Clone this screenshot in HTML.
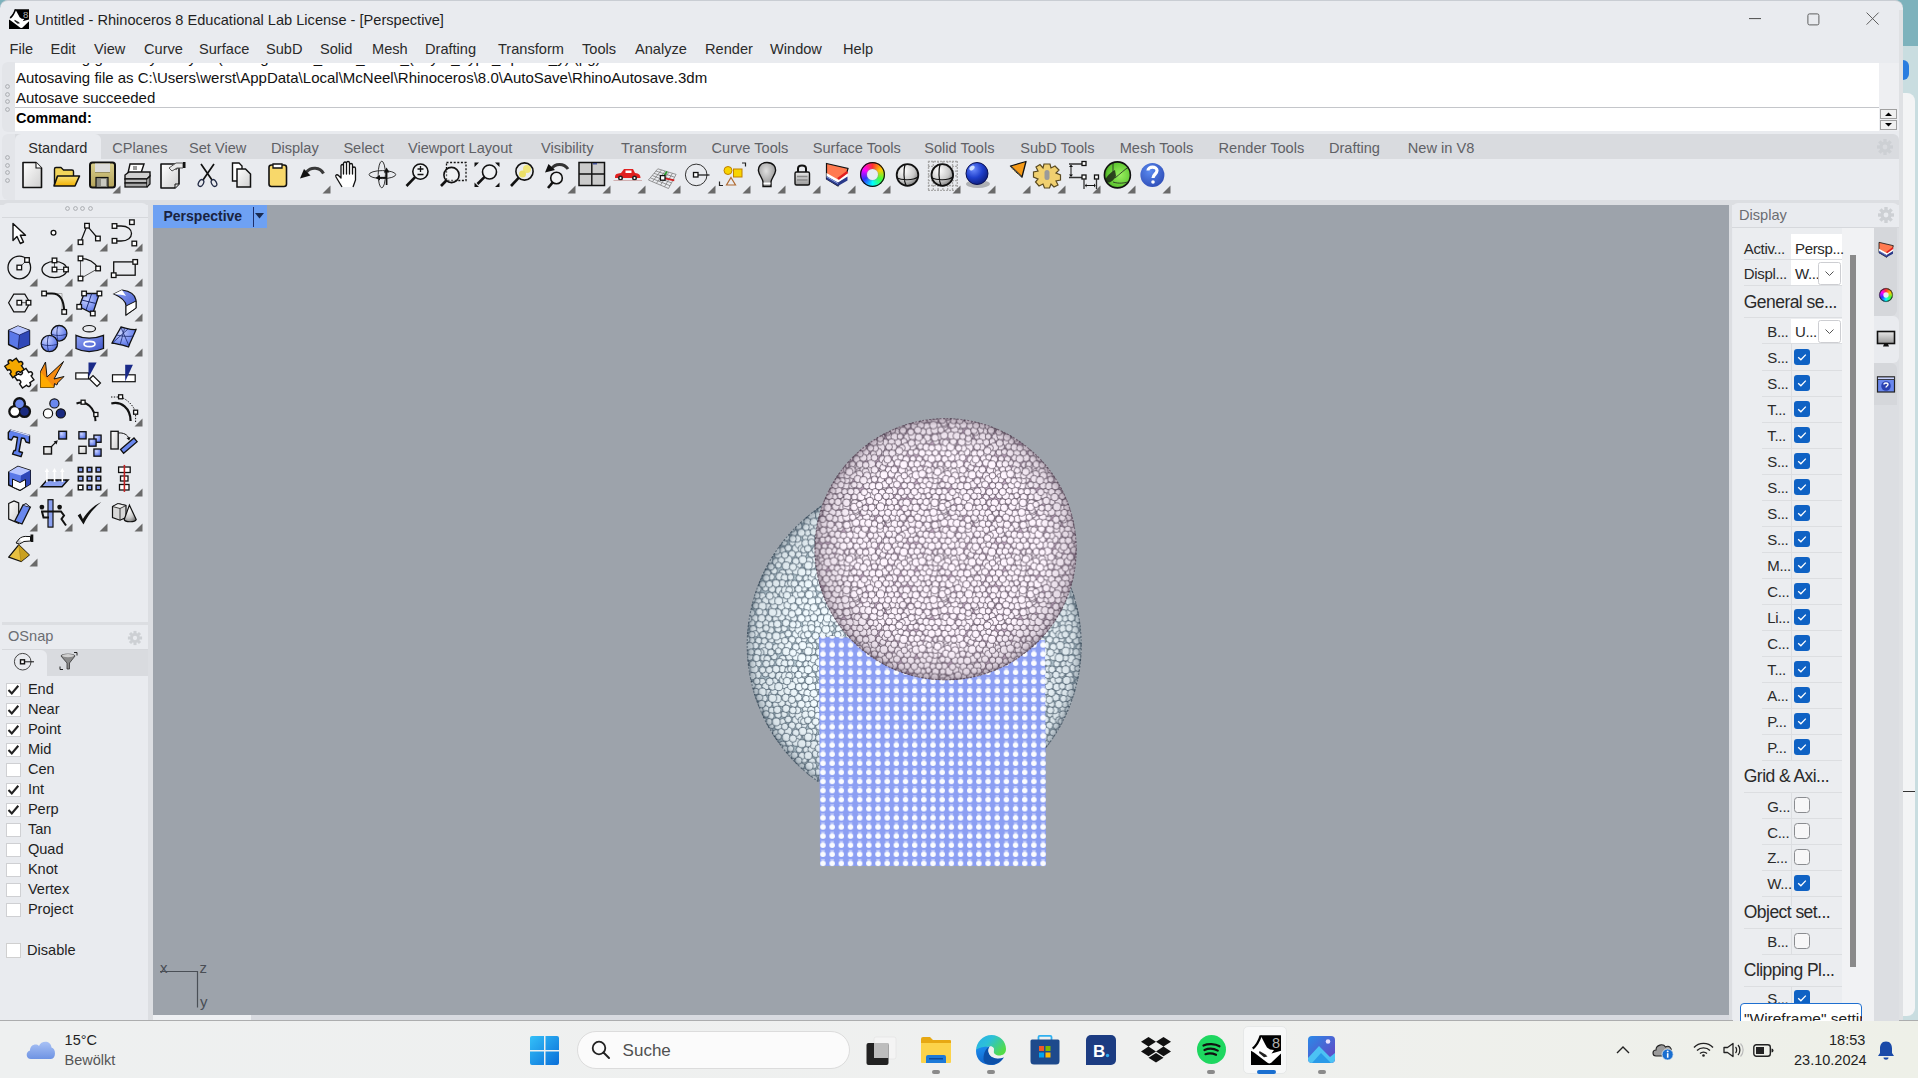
<!DOCTYPE html><html><head><meta charset="utf-8"><style>
*{margin:0;padding:0;box-sizing:border-box}
html,body{width:1918px;height:1078px;overflow:hidden;background:#7eb0bb;font-family:"Liberation Sans", sans-serif}
.t{position:absolute;white-space:nowrap;line-height:1;}
svg{position:absolute;overflow:visible}
</style></head><body><div style="position:absolute;left:0px;top:0px;width:1918px;height:1078px;background:#c9dde0"></div>
<div style="position:absolute;left:0px;top:0px;width:1918px;height:46px;background:#7db2bc"></div>
<div style="position:absolute;left:1903px;top:93px;width:12px;height:923px;background:#f3f4f5;border-radius:0 8px 8px 0"></div>
<div style="position:absolute;left:1903px;top:791px;width:12px;height:1px;background:#333"></div>
<div style="position:absolute;left:1903px;top:60px;width:6px;height:20px;background:#2a7de0;border-radius:0 6px 6px 0"></div>
<div style="position:absolute;left:0px;top:0px;width:1903px;height:1021px;background:#e9ebef;border-radius:8px 8px 0 0;border-top:1px solid #c9cdd3"></div>
<div class="t" style="left:35px;top:12.6px;font-size:14.6px;color:#1f1f1f;font-weight:normal;">Untitled - Rhinoceros 8 Educational Lab License - [Perspective]</div>
<svg style="left:9px;top:9px" width="20" height="20" viewBox="0 0 30 30"><path d="M9.5 0.3 H30 V30 H0 V15.5 C3 13 6 9 9.5 0.3Z" fill="#000"/><path d="M9.5 0.5 C11.5 4 14 9 16 12.5 L19 14.5 L23 15 L20.5 18.5 L30 15.8 V18.5 L21.5 26.5 C19.5 29 17.5 29 15.5 27 L3 17.5 L0 15.8 V15 C4 12.5 7 7 9.5 0.5Z" fill="#fff"/><path d="M9.8 0.5 C8 6 5 11 1.8 13.5" fill="none" stroke="#000" stroke-width="2.4"/><path d="M8.5 16 L14.5 19.5 L16.5 21.5 L13 22.2 L8 18Z" fill="#222"/><text x="21" y="13" font-family="Liberation Sans" font-size="14.5" fill="#b0b0b0">8</text></svg>
<svg style="left:1749px;top:17.5px" width="13" height="2"><rect width="12" height="1.1" fill="#5a5a5a"/></svg>
<svg style="left:1806.5px;top:12.8px" width="14" height="14"><rect x="0.9" y="0.9" width="11" height="11" rx="1.6" fill="none" stroke="#5e5e5e" stroke-width="1"/></svg>
<svg style="left:1865.5px;top:12.3px" width="14" height="14"><path d="M0.6 0.6 L12.6 12.6 M12.6 0.6 L0.6 12.6" stroke="#5e5e5e" stroke-width="1"/></svg>
<div class="t" style="left:9.5px;top:41.6px;font-size:14.6px;color:#2a2a2a;font-weight:normal;">File</div>
<div class="t" style="left:50.5px;top:41.6px;font-size:14.6px;color:#2a2a2a;font-weight:normal;">Edit</div>
<div class="t" style="left:94px;top:41.6px;font-size:14.6px;color:#2a2a2a;font-weight:normal;">View</div>
<div class="t" style="left:144px;top:41.6px;font-size:14.6px;color:#2a2a2a;font-weight:normal;">Curve</div>
<div class="t" style="left:199px;top:41.6px;font-size:14.6px;color:#2a2a2a;font-weight:normal;">Surface</div>
<div class="t" style="left:266px;top:41.6px;font-size:14.6px;color:#2a2a2a;font-weight:normal;">SubD</div>
<div class="t" style="left:320px;top:41.6px;font-size:14.6px;color:#2a2a2a;font-weight:normal;">Solid</div>
<div class="t" style="left:372px;top:41.6px;font-size:14.6px;color:#2a2a2a;font-weight:normal;">Mesh</div>
<div class="t" style="left:425px;top:41.6px;font-size:14.6px;color:#2a2a2a;font-weight:normal;">Drafting</div>
<div class="t" style="left:498px;top:41.6px;font-size:14.6px;color:#2a2a2a;font-weight:normal;">Transform</div>
<div class="t" style="left:582px;top:41.6px;font-size:14.6px;color:#2a2a2a;font-weight:normal;">Tools</div>
<div class="t" style="left:635px;top:41.6px;font-size:14.6px;color:#2a2a2a;font-weight:normal;">Analyze</div>
<div class="t" style="left:705px;top:41.6px;font-size:14.6px;color:#2a2a2a;font-weight:normal;">Render</div>
<div class="t" style="left:770px;top:41.6px;font-size:14.6px;color:#2a2a2a;font-weight:normal;">Window</div>
<div class="t" style="left:843px;top:41.6px;font-size:14.6px;color:#2a2a2a;font-weight:normal;">Help</div>
<div style="position:absolute;left:2px;top:62px;width:13px;height:70px;background:#e3e5e9;border-radius:6px 0 0 6px"></div>
<svg style="left:5px;top:84.0px" width="5" height="5"><circle cx="2.5" cy="2.5" r="1.9" fill="none" stroke="#a4a6aa" stroke-width="0.9"/></svg>
<svg style="left:5px;top:91.5px" width="5" height="5"><circle cx="2.5" cy="2.5" r="1.9" fill="none" stroke="#a4a6aa" stroke-width="0.9"/></svg>
<svg style="left:5px;top:99.0px" width="5" height="5"><circle cx="2.5" cy="2.5" r="1.9" fill="none" stroke="#a4a6aa" stroke-width="0.9"/></svg>
<svg style="left:5px;top:106.5px" width="5" height="5"><circle cx="2.5" cy="2.5" r="1.9" fill="none" stroke="#a4a6aa" stroke-width="0.9"/></svg>
<div style="position:absolute;left:15px;top:63px;width:1864px;height:68px;background:#fff"></div>
<div style="position:absolute;left:1879px;top:63px;width:20px;height:68px;background:#eeeff2"></div>
<div style="position:absolute;left:15px;top:107px;width:1864px;height:1px;background:#c4c6ca"></div>
<div style="position:absolute;left:15px;top:63px;width:1864px;height:10px;overflow:hidden"><div class="t" style="left:1px;top:-13.4px;font-size:15px;color:#111">Autosaving geometry in layer: (Saving: Mesh_Point_cloud_(Layer_Type_Sphere_y) (pg)</div></div>
<div class="t" style="left:16px;top:69.8px;font-size:15px;color:#111;font-weight:normal;">Autosaving file as C:\Users\werst\AppData\Local\McNeel\Rhinoceros\8.0\AutoSave\RhinoAutosave.3dm</div>
<div class="t" style="left:16px;top:89.8px;font-size:15px;color:#111;font-weight:normal;">Autosave succeeded</div>
<div class="t" style="left:16px;top:110.9px;font-size:14.5px;color:#000;font-weight:bold;">Command:</div>
<svg style="left:1880px;top:109px" width="18" height="21"><rect x="0.5" y="0.5" width="16" height="9" fill="#f0f0f0" stroke="#a0a0a0"/><rect x="0.5" y="11.5" width="16" height="9" fill="#f0f0f0" stroke="#a0a0a0"/><path d="M5 7 L8.5 3.5 L12 7Z" fill="#000"/><path d="M5 14 L8.5 17.5 L12 14Z" fill="#000"/></svg>
<div style="position:absolute;left:2px;top:134px;width:1897px;height:66px;background:#e9ebef;border-radius:6px"></div>
<div style="position:absolute;left:2px;top:134px;width:13px;height:66px;background:#e3e5e9;border-radius:6px 0 0 6px"></div>
<svg style="left:5px;top:155.0px" width="5" height="5"><circle cx="2.5" cy="2.5" r="1.9" fill="none" stroke="#a4a6aa" stroke-width="0.9"/></svg>
<svg style="left:5px;top:162.5px" width="5" height="5"><circle cx="2.5" cy="2.5" r="1.9" fill="none" stroke="#a4a6aa" stroke-width="0.9"/></svg>
<svg style="left:5px;top:170.0px" width="5" height="5"><circle cx="2.5" cy="2.5" r="1.9" fill="none" stroke="#a4a6aa" stroke-width="0.9"/></svg>
<svg style="left:5px;top:177.5px" width="5" height="5"><circle cx="2.5" cy="2.5" r="1.9" fill="none" stroke="#a4a6aa" stroke-width="0.9"/></svg>
<div style="position:absolute;left:15px;top:134px;width:1884px;height:25px;background:#d9dbdf;border-radius:0 6px 0 0"></div>
<div style="position:absolute;left:15px;top:134px;width:86px;height:26px;background:#e9ebef;border-radius:6px 6px 0 0"></div>
<div class="t" style="left:28.2px;top:140.6px;font-size:14.6px;color:#2a2a2a;font-weight:normal;">Standard</div>
<div class="t" style="left:112.3px;top:140.6px;font-size:14.6px;color:#5f6166;font-weight:normal;">CPlanes</div>
<div class="t" style="left:189px;top:140.6px;font-size:14.6px;color:#5f6166;font-weight:normal;">Set View</div>
<div class="t" style="left:270.9px;top:140.6px;font-size:14.6px;color:#5f6166;font-weight:normal;">Display</div>
<div class="t" style="left:343.4px;top:140.6px;font-size:14.6px;color:#5f6166;font-weight:normal;">Select</div>
<div class="t" style="left:408px;top:140.6px;font-size:14.6px;color:#5f6166;font-weight:normal;">Viewport Layout</div>
<div class="t" style="left:541px;top:140.6px;font-size:14.6px;color:#5f6166;font-weight:normal;">Visibility</div>
<div class="t" style="left:621px;top:140.6px;font-size:14.6px;color:#5f6166;font-weight:normal;">Transform</div>
<div class="t" style="left:711.5px;top:140.6px;font-size:14.6px;color:#5f6166;font-weight:normal;">Curve Tools</div>
<div class="t" style="left:812.7px;top:140.6px;font-size:14.6px;color:#5f6166;font-weight:normal;">Surface Tools</div>
<div class="t" style="left:924.2px;top:140.6px;font-size:14.6px;color:#5f6166;font-weight:normal;">Solid Tools</div>
<div class="t" style="left:1020.2px;top:140.6px;font-size:14.6px;color:#5f6166;font-weight:normal;">SubD Tools</div>
<div class="t" style="left:1119.7px;top:140.6px;font-size:14.6px;color:#5f6166;font-weight:normal;">Mesh Tools</div>
<div class="t" style="left:1218.5px;top:140.6px;font-size:14.6px;color:#5f6166;font-weight:normal;">Render Tools</div>
<div class="t" style="left:1328.9px;top:140.6px;font-size:14.6px;color:#5f6166;font-weight:normal;">Drafting</div>
<div class="t" style="left:1407.8px;top:140.6px;font-size:14.6px;color:#5f6166;font-weight:normal;">New in V8</div>
<div style="position:absolute;left:0px;top:200px;width:1903px;height:5px;background:#dcdee2"></div>
<div style="position:absolute;left:2px;top:203px;width:146px;height:419px;background:#e9ebef;border-radius:6px 6px 0 0"></div>
<div style="position:absolute;left:2px;top:217px;width:146px;height:1px;background:#d6d8dc"></div>
<svg style="left:65.0px;top:206px" width="5" height="5"><circle cx="2.5" cy="2.5" r="1.9" fill="none" stroke="#a4a6aa" stroke-width="0.9"/></svg>
<svg style="left:72.5px;top:206px" width="5" height="5"><circle cx="2.5" cy="2.5" r="1.9" fill="none" stroke="#a4a6aa" stroke-width="0.9"/></svg>
<svg style="left:80.0px;top:206px" width="5" height="5"><circle cx="2.5" cy="2.5" r="1.9" fill="none" stroke="#a4a6aa" stroke-width="0.9"/></svg>
<svg style="left:87.5px;top:206px" width="5" height="5"><circle cx="2.5" cy="2.5" r="1.9" fill="none" stroke="#a4a6aa" stroke-width="0.9"/></svg>
<div style="position:absolute;left:148px;top:200px;width:5px;height:821px;background:#dcdee2"></div>
<div style="position:absolute;left:2px;top:622px;width:146px;height:3px;background:#dcdee2"></div>
<div style="position:absolute;left:2px;top:625px;width:146px;height:393px;background:#e9ebef;border-radius:6px 6px 0 0"></div>
<div class="t" style="left:8px;top:629.3px;font-size:14.6px;color:#6b6d72;font-weight:normal;">OSnap</div>
<div style="position:absolute;left:2px;top:649px;width:146px;height:27px;background:#d9dbdf"></div>
<div style="position:absolute;left:2px;top:649px;width:146px;height:1px;background:#d6d8dc"></div>
<div style="position:absolute;left:2px;top:650px;width:45px;height:26px;background:#e9ebef;border-radius:0 6px 0 0"></div>
<svg style="left:12px;top:651px" width="24" height="22"><circle cx="10.7" cy="10.7" r="8.3" fill="none" stroke="#444" stroke-width="1"/><rect x="8.5" y="8.8" width="4" height="4" fill="#fff" stroke="#111" stroke-width="1.4"/><path d="M12.5 10.8 H22" stroke="#111" stroke-width="1"/></svg>
<svg style="left:59px;top:652px" width="20" height="20"><path d="M2 4 C2 1.5 16 1.5 16 4 L10.5 11 V17 H8 V11Z" fill="#8a8a8a" stroke="#333" stroke-width="0.8"/><ellipse cx="9" cy="3.6" rx="6" ry="1.6" fill="#d0d0d0"/><path d="M15 0.5 H18 V3.5 M1 14.5 V17.5 H4" fill="none" stroke="#222" stroke-width="1"/></svg>
<svg style="left:127px;top:630px" width="16" height="16" viewBox="0 0 18 18"><g fill="#cdd0d4"><circle cx="9" cy="9" r="5.5"/><rect x="7.3" y="1" width="3.4" height="4" transform="rotate(0 9 9)"/><rect x="7.3" y="1" width="3.4" height="4" transform="rotate(45 9 9)"/><rect x="7.3" y="1" width="3.4" height="4" transform="rotate(90 9 9)"/><rect x="7.3" y="1" width="3.4" height="4" transform="rotate(135 9 9)"/><rect x="7.3" y="1" width="3.4" height="4" transform="rotate(180 9 9)"/><rect x="7.3" y="1" width="3.4" height="4" transform="rotate(225 9 9)"/><rect x="7.3" y="1" width="3.4" height="4" transform="rotate(270 9 9)"/><rect x="7.3" y="1" width="3.4" height="4" transform="rotate(315 9 9)"/></g><circle cx="9" cy="9" r="2.4" fill="#e9ebef"/></svg>
<svg style="left:5.5px;top:682.5px" width="15" height="14"><rect x="0.5" y="0.5" width="14" height="13" fill="#fff" stroke="#cfd0d3"/><path d="M2.5 7 L5.8 10.5 L12.3 2.8" stroke="#222" stroke-width="2.1" fill="none"/></svg>
<div class="t" style="left:27.9px;top:681.8px;font-size:14.6px;color:#1f1f1f;font-weight:normal;">End</div>
<svg style="left:5.5px;top:702.5px" width="15" height="14"><rect x="0.5" y="0.5" width="14" height="13" fill="#fff" stroke="#cfd0d3"/><path d="M2.5 7 L5.8 10.5 L12.3 2.8" stroke="#222" stroke-width="2.1" fill="none"/></svg>
<div class="t" style="left:27.9px;top:701.8px;font-size:14.6px;color:#1f1f1f;font-weight:normal;">Near</div>
<svg style="left:5.5px;top:722.5px" width="15" height="14"><rect x="0.5" y="0.5" width="14" height="13" fill="#fff" stroke="#cfd0d3"/><path d="M2.5 7 L5.8 10.5 L12.3 2.8" stroke="#222" stroke-width="2.1" fill="none"/></svg>
<div class="t" style="left:27.9px;top:721.8px;font-size:14.6px;color:#1f1f1f;font-weight:normal;">Point</div>
<svg style="left:5.5px;top:742.5px" width="15" height="14"><rect x="0.5" y="0.5" width="14" height="13" fill="#fff" stroke="#cfd0d3"/><path d="M2.5 7 L5.8 10.5 L12.3 2.8" stroke="#222" stroke-width="2.1" fill="none"/></svg>
<div class="t" style="left:27.9px;top:741.8px;font-size:14.6px;color:#1f1f1f;font-weight:normal;">Mid</div>
<svg style="left:5.5px;top:762.5px" width="15" height="14"><rect x="0.5" y="0.5" width="14" height="13" fill="#fff" stroke="#cfd0d3"/></svg>
<div class="t" style="left:27.9px;top:761.8px;font-size:14.6px;color:#1f1f1f;font-weight:normal;">Cen</div>
<svg style="left:5.5px;top:782.5px" width="15" height="14"><rect x="0.5" y="0.5" width="14" height="13" fill="#fff" stroke="#cfd0d3"/><path d="M2.5 7 L5.8 10.5 L12.3 2.8" stroke="#222" stroke-width="2.1" fill="none"/></svg>
<div class="t" style="left:27.9px;top:781.8px;font-size:14.6px;color:#1f1f1f;font-weight:normal;">Int</div>
<svg style="left:5.5px;top:802.5px" width="15" height="14"><rect x="0.5" y="0.5" width="14" height="13" fill="#fff" stroke="#cfd0d3"/><path d="M2.5 7 L5.8 10.5 L12.3 2.8" stroke="#222" stroke-width="2.1" fill="none"/></svg>
<div class="t" style="left:27.9px;top:801.8px;font-size:14.6px;color:#1f1f1f;font-weight:normal;">Perp</div>
<svg style="left:5.5px;top:822.5px" width="15" height="14"><rect x="0.5" y="0.5" width="14" height="13" fill="#fff" stroke="#cfd0d3"/></svg>
<div class="t" style="left:27.9px;top:821.8px;font-size:14.6px;color:#1f1f1f;font-weight:normal;">Tan</div>
<svg style="left:5.5px;top:842.5px" width="15" height="14"><rect x="0.5" y="0.5" width="14" height="13" fill="#fff" stroke="#cfd0d3"/></svg>
<div class="t" style="left:27.9px;top:841.8px;font-size:14.6px;color:#1f1f1f;font-weight:normal;">Quad</div>
<svg style="left:5.5px;top:862.5px" width="15" height="14"><rect x="0.5" y="0.5" width="14" height="13" fill="#fff" stroke="#cfd0d3"/></svg>
<div class="t" style="left:27.9px;top:861.8px;font-size:14.6px;color:#1f1f1f;font-weight:normal;">Knot</div>
<svg style="left:5.5px;top:882.5px" width="15" height="14"><rect x="0.5" y="0.5" width="14" height="13" fill="#fff" stroke="#cfd0d3"/></svg>
<div class="t" style="left:27.9px;top:881.8px;font-size:14.6px;color:#1f1f1f;font-weight:normal;">Vertex</div>
<svg style="left:5.5px;top:902.5px" width="15" height="14"><rect x="0.5" y="0.5" width="14" height="13" fill="#fff" stroke="#cfd0d3"/></svg>
<div class="t" style="left:27.9px;top:901.8px;font-size:14.6px;color:#1f1f1f;font-weight:normal;">Project</div>
<svg style="left:6px;top:943px" width="15" height="15"><rect x="0.5" y="0.5" width="14" height="14" fill="#fff" stroke="#d0d0d0"/></svg>
<div class="t" style="left:27px;top:943.1px;font-size:14.6px;color:#1f1f1f;font-weight:normal;">Disable</div>
<div style="position:absolute;left:153px;top:205px;width:1576px;height:810px;background:#9da3ab"></div>
<div style="position:absolute;left:153px;top:205px;width:114px;height:23px;background:#6ea1f3"></div>
<div class="t" style="left:163.5px;top:208.9px;font-size:14px;color:#1a2340;font-weight:bold;">Perspective</div>
<div style="position:absolute;left:253px;top:207px;width:1.2px;height:20px;background:#1f2f6a"></div>
<svg style="left:255px;top:213px" width="10" height="6"><path d="M0 0 L9 0 L4.5 5.5Z" fill="#1a2a50"/></svg>
<div style="position:absolute;left:153px;top:1015px;width:1576px;height:5px;background:#d8dae0"></div>
<div style="position:absolute;left:153px;top:1015px;width:98px;height:5px;background:#eef0f3"></div>
<div style="position:absolute;left:1729px;top:200px;width:3px;height:821px;background:#dcdee2"></div>
<div style="position:absolute;left:1732px;top:203px;width:167px;height:818px;background:#e9ebef;border-radius:6px 6px 0 0"></div>
<div class="t" style="left:1739px;top:208.1px;font-size:14.6px;color:#6b6d72;font-weight:normal;">Display</div>
<div style="position:absolute;left:1732px;top:227px;width:167px;height:1px;background:#d6d8dc"></div>
<div style="position:absolute;left:1874px;top:228px;width:25px;height:793px;background:#dcdee2"></div>
<div style="position:absolute;left:1899px;top:10px;width:4px;height:1011px;background:#dfe1e4"></div>
<div style="position:absolute;left:0px;top:1020px;width:1918px;height:58px;background:linear-gradient(90deg,#eef0f0 0%,#eff0ef 60%,#eef0e8 100%);border-top:1px solid #acadae"></div>
<svg width="0" height="0" style="position:absolute"><defs><linearGradient id="gW" x1="0" y1="0" x2="1" y2="1"><stop offset="0" stop-color="#ffffff"/><stop offset="1" stop-color="#cfcfcf"/></linearGradient><linearGradient id="gY" x1="0" y1="0" x2="0" y2="1"><stop offset="0" stop-color="#f8e27a"/><stop offset="1" stop-color="#f2b000"/></linearGradient><linearGradient id="gK" x1="0" y1="0" x2="0" y2="1"><stop offset="0" stop-color="#d9cf8e"/><stop offset="1" stop-color="#b4a35a"/></linearGradient><linearGradient id="gGr" x1="0" y1="0" x2="0" y2="1"><stop offset="0" stop-color="#e8e8e8"/><stop offset="1" stop-color="#9a9a9a"/></linearGradient><linearGradient id="gB" x1="0" y1="0" x2="0" y2="1"><stop offset="0" stop-color="#a9b8ff"/><stop offset="1" stop-color="#4058d8"/></linearGradient><linearGradient id="gBl" x1="0" y1="0" x2="1" y2="1"><stop offset="0" stop-color="#8fa3f5"/><stop offset="1" stop-color="#3d54c9"/></linearGradient><radialGradient id="rS" cx="0.35" cy="0.3" r="0.8"><stop offset="0" stop-color="#ffffff"/><stop offset="0.6" stop-color="#c8c8c8"/><stop offset="1" stop-color="#6f6f6f"/></radialGradient><radialGradient id="rBS" cx="0.35" cy="0.3" r="0.8"><stop offset="0" stop-color="#6d8dff"/><stop offset="0.5" stop-color="#1f3fcc"/><stop offset="1" stop-color="#0a1870"/></radialGradient><radialGradient id="rG" cx="0.6" cy="0.5" r="0.7"><stop offset="0" stop-color="#9af060"/><stop offset="0.7" stop-color="#5dc530"/><stop offset="1" stop-color="#2a6a10"/></radialGradient><radialGradient id="rH" cx="0.4" cy="0.35" r="0.8"><stop offset="0" stop-color="#5a8af0"/><stop offset="1" stop-color="#2a46b0"/></radialGradient><radialGradient id="rBlu" cx="0.35" cy="0.3" r="0.9"><stop offset="0" stop-color="#c8d2ff"/><stop offset="0.6" stop-color="#7088ee"/><stop offset="1" stop-color="#3a50b8"/></radialGradient><radialGradient id="rBulb" cx="0.45" cy="0.35" r="0.7"><stop offset="0" stop-color="#e0e0e0"/><stop offset="1" stop-color="#8a8a8a"/></radialGradient><conicGradient id="cw"/></defs></svg>
<svg style="left:16.5px;top:160px" width="30" height="30" viewBox="0 0 30 30"><path d="M6 2.5 H19 L24.5 8 V27.5 H6 Z" fill="url(#gW)" stroke="#111" stroke-width="1.6" stroke-linejoin="round"/><path d="M19 2.5 V8 H24.5" fill="#fff" stroke="#111" stroke-width="1.1"/></svg>
<svg style="left:51.5px;top:160px" width="30" height="30" viewBox="0 0 30 30"><path d="M2.5 25 V9 Q2.5 7.5 4 7.5 H9 L11.5 10 H20 Q21.5 10 21.5 11.5 V17 Z" fill="#f2d55a" stroke="#111" stroke-width="1.4" stroke-linejoin="round"/><path d="M5.5 16 H27.5 L23 26 H2 Z" fill="url(#gY)" stroke="#111" stroke-width="1.6" stroke-linejoin="round"/></svg>
<svg style="left:86.5px;top:160px" width="30" height="30" viewBox="0 0 30 30"><rect x="3" y="2.5" width="25" height="25" rx="2.5" fill="url(#gK)" stroke="#111" stroke-width="2"/><rect x="8" y="3.5" width="15" height="9" fill="#dcdcdc"/><path d="M8 12.5 H23" stroke="#9a9060" stroke-width="1"/><rect x="9" y="17.5" width="12" height="10" fill="#8d8d84" stroke="#111" stroke-width="1.2"/><rect x="14" y="19" width="5" height="7" fill="#c9c9c0"/></svg>
<svg style="left:111.5px;top:184.5px" width="9" height="9"><path d="M8.5 0.5 V8.5 H0.5Z" fill="#6a6a6a"/></svg>
<svg style="left:121.5px;top:160px" width="30" height="30" viewBox="0 0 30 30"><path d="M8 4 H22 L19 13 H6 Z" fill="#fff" stroke="#111" stroke-width="1.4"/><rect x="11" y="6" width="4" height="4" fill="#9a9a9a"/><path d="M3 15 L7 12 H28 V16 L25 19 H3 Z" fill="#cfcfcf" stroke="#111" stroke-width="1.4"/><rect x="3" y="19" width="22" height="4" fill="#bdbdbd" stroke="#111" stroke-width="1.3"/><rect x="3" y="23" width="22" height="4" fill="#a5a5a5" stroke="#111" stroke-width="1.3"/><path d="M25 19 L28 16 V24 L25 27" fill="#9a9a9a" stroke="#111" stroke-width="1.2"/></svg>
<svg style="left:156.5px;top:160px" width="30" height="30" viewBox="0 0 30 30"><path d="M4 4 H19 V9 L22 6 V24 L18 28 H4 Z" fill="url(#gW)" stroke="#111" stroke-width="1.6" stroke-linejoin="round"/><path d="M22 24 H18 V28" fill="#ddd" stroke="#111" stroke-width="1"/><path d="M12 8 L19 3 H26 V8 H20 L15 11Z" fill="#e8e8e8" stroke="#555" stroke-width="1"/><rect x="26" y="2" width="2.5" height="6" fill="#111"/></svg>
<svg style="left:191.5px;top:160px" width="30" height="30" viewBox="0 0 30 30"><path d="M9 4 L20 20 M22 4 L11 20" stroke="#111" stroke-width="1.7" fill="none"/><ellipse cx="9" cy="23" rx="2.4" ry="3.6" transform="rotate(30 9 23)" fill="none" stroke="#222a44" stroke-width="1.3"/><ellipse cx="22" cy="23" rx="2.4" ry="3.6" transform="rotate(-30 22 23)" fill="none" stroke="#222a44" stroke-width="1.3"/></svg>
<svg style="left:226.5px;top:160px" width="30" height="30" viewBox="0 0 30 30"><path d="M5.5 3 H12 L15 6 V21 H5.5 Z" fill="#fff" stroke="#111" stroke-width="1.4"/><path d="M10 9 H18.5 L23.5 14 V27 H10 Z" fill="url(#gW)" stroke="#111" stroke-width="1.5"/></svg>
<svg style="left:261.5px;top:160px" width="30" height="30" viewBox="0 0 30 30"><rect x="7" y="5" width="17.5" height="21.5" rx="2.5" fill="#f8d86a" stroke="#111" stroke-width="1.6"/><path d="M11 4 H20 V8 H11 Z" fill="#fff" stroke="#111" stroke-width="1.3"/></svg>
<svg style="left:296.5px;top:160px" width="30" height="30" viewBox="0 0 30 30"><path d="M26.5 13.5 C23 7 14 6.5 9.5 12" fill="none" stroke="#3a3a3a" stroke-width="3"/><path d="M3 18.5 L7 9 L13.5 15.5 Z" fill="#111"/></svg>
<svg style="left:321.5px;top:184.5px" width="9" height="9"><path d="M8.5 0.5 V8.5 H0.5Z" fill="#6a6a6a"/></svg>
<svg style="left:331.5px;top:160px" width="30" height="30" viewBox="0 0 30 30"><path d="M10 27 L4 17 C3 15 5 14 6.5 15.5 L9 18 V6 C9 4 11.5 4 11.5 6 V14 V3.5 C11.5 1.5 14.5 1.5 14.5 3.5 V14 V3 C14.5 1 17.5 1 17.5 3 V14 V5 C17.5 3 20.5 3 20.5 5 V14 V8.5 C20.5 6.5 23.5 6.5 23.5 8.5 V20 L21 27" fill="#fff" stroke="#111" stroke-width="1.3" stroke-linejoin="round"/></svg>
<svg style="left:366.5px;top:160px" width="30" height="30" viewBox="0 0 30 30"><ellipse cx="15.4" cy="14.6" rx="13.3" ry="4" fill="none" stroke="#333" stroke-width="1"/><ellipse cx="14.8" cy="14.5" rx="3.6" ry="13.3" fill="none" stroke="#333" stroke-width="1"/><path d="M19.6 25 V11" stroke="#111" stroke-width="1.7"/><path d="M16.8 12.5 L19.6 7.5 L22.4 12.5Z" fill="#111"/><path d="M20 17.7 H12" stroke="#111" stroke-width="1.7"/><path d="M13 15 L8.5 17.7 L13 20.4Z" fill="#111"/></svg>
<svg style="left:401.5px;top:160px" width="30" height="30" viewBox="0 0 30 30"><circle cx="18.4" cy="11.6" r="7.6" fill="#fff" fill-opacity="0.35" stroke="#111" stroke-width="1.6"/><path d="M13.1 17.1 L4.5 26" stroke="#111" stroke-width="2.6" stroke-linecap="butt"/><path d="M15.5 9 H21.5 M18.5 6 V12 M15.5 14.5 H21.5" stroke="#111" stroke-width="1.3"/></svg>
<svg style="left:436.5px;top:160px" width="30" height="30" viewBox="0 0 30 30"><rect x="9.5" y="2.5" width="19.5" height="18" fill="none" stroke="#111" stroke-width="1.3" stroke-dasharray="2 1.6"/><circle cx="14.5" cy="15" r="7.6" fill="#fff" fill-opacity="0.35" stroke="#111" stroke-width="1.6"/><path d="M9.3 20.5 L4 26" stroke="#111" stroke-width="2.6" stroke-linecap="butt"/></svg>
<svg style="left:471.5px;top:160px" width="30" height="30" viewBox="0 0 30 30"><path d="M2.5 2.5 H7 L2.5 7Z M27.5 2.5 H23 L27.5 7Z M2.5 27 H7 L2.5 22.5Z M27.5 27 H23 L27.5 22.5Z" fill="#111"/><circle cx="17.5" cy="12" r="7" fill="#fff" fill-opacity="0.35" stroke="#111" stroke-width="1.6"/><path d="M12.6 16.9 L5.5 24" stroke="#111" stroke-width="2.6" stroke-linecap="butt"/></svg>
<svg style="left:506.5px;top:160px" width="30" height="30" viewBox="0 0 30 30"><circle cx="20" cy="9" r="4" fill="#f1e23a"/><circle cx="15.5" cy="14" r="3.5" fill="#e8d820"/><circle cx="17.5" cy="11.5" r="8.6" fill="#eee" fill-opacity="0.35" stroke="#111" stroke-width="1.6"/><path d="M11.6 17.8 L4 26" stroke="#111" stroke-width="2.6" stroke-linecap="butt"/></svg>
<svg style="left:541.5px;top:160px" width="30" height="30" viewBox="0 0 30 30"><path d="M26 9 C22 3 13 3 9.5 9" fill="none" stroke="#333" stroke-width="3"/><path d="M3 12.5 L6.5 4 L13 10 Z" fill="#111"/><circle cx="14.5" cy="18" r="5.8" fill="#fff" fill-opacity="0.35" stroke="#111" stroke-width="1.6"/><path d="M10.7 22.4 L6 28" stroke="#111" stroke-width="2.6" stroke-linecap="butt"/></svg>
<svg style="left:566.5px;top:184.5px" width="9" height="9"><path d="M8.5 0.5 V8.5 H0.5Z" fill="#6a6a6a"/></svg>
<svg style="left:576.5px;top:160px" width="30" height="30" viewBox="0 0 30 30"><rect x="2" y="2.5" width="25.5" height="23" fill="#cbcbcb" stroke="#111" stroke-width="1.5"/><path d="M14.8 2.5 V25.5 M2 14 H27.5" stroke="#111" stroke-width="1.4"/><rect x="16" y="3.2" width="4" height="1.2" fill="#2a3a90"/></svg>
<svg style="left:601.5px;top:184.5px" width="9" height="9"><path d="M8.5 0.5 V8.5 H0.5Z" fill="#6a6a6a"/></svg>
<svg style="left:611.5px;top:160px" width="30" height="30" viewBox="0 0 30 30"><path d="M3 17 C3 14 5 13.5 9 13 L12 9 H21 L23 13 C27 13.5 28.5 15 28.5 18 H3Z" fill="#e02020"/><rect x="13.5" y="10.5" width="6" height="2.5" fill="#fff"/><circle cx="8.5" cy="18" r="2.5" fill="#222"/><circle cx="8.5" cy="18" r="1" fill="#fff"/><circle cx="22.5" cy="18" r="2.5" fill="#222"/><circle cx="22.5" cy="18" r="1" fill="#fff"/><path d="M1.5 20.5 H30" stroke="#c9a0a0" stroke-width="0.8"/></svg>
<svg style="left:636.5px;top:184.5px" width="9" height="9"><path d="M8.5 0.5 V8.5 H0.5Z" fill="#6a6a6a"/></svg>
<svg style="left:646.5px;top:160px" width="30" height="30" viewBox="0 0 30 30"><path d="M1.4 20.0 L21.5 28.5 M1.4 20.0 L10.8 8.8 M3.3 17.8 L23.0 25.7 M5.4 21.7 L14.5 9.9 M5.2 15.5 L24.5 22.9 M9.4 23.4 L18.1 11.0 M7.0 13.3 L26.1 20.0 M13.5 25.1 L21.8 12.2 M8.9 11.0 L27.6 17.2 M17.5 26.8 L25.4 13.3 M10.8 8.8 L29.1 14.4 M21.5 28.5 L29.1 14.4 " stroke="#7a7a7a" stroke-width="0.75" fill="none"/><path d="M15.7 17.9 L20.0 11.6" stroke="#2a9a2a" stroke-width="1.8"/><path d="M15.7 17.9 L27.3 20.4" stroke="#d02020" stroke-width="1.8"/><rect x="13.4" y="15.6" width="4.6" height="4.6" fill="#fff" stroke="#111" stroke-width="1.3"/></svg>
<svg style="left:671.5px;top:184.5px" width="9" height="9"><path d="M8.5 0.5 V8.5 H0.5Z" fill="#6a6a6a"/></svg>
<svg style="left:681.5px;top:160px" width="30" height="30" viewBox="0 0 30 30"><circle cx="14.2" cy="14.9" r="10.8" fill="none" stroke="#333" stroke-width="1"/><path d="M14 15 H27.5" stroke="#111" stroke-width="1.2"/><rect x="11.5" y="12.5" width="4.5" height="4.5" fill="#fff" stroke="#111" stroke-width="1.3"/></svg>
<svg style="left:706.5px;top:184.5px" width="9" height="9"><path d="M8.5 0.5 V8.5 H0.5Z" fill="#6a6a6a"/></svg>
<svg style="left:716.5px;top:160px" width="30" height="30" viewBox="0 0 30 30"><circle cx="11" cy="10.5" r="4" fill="#f8d400" stroke="#c08000" stroke-width="1"/><rect x="16.5" y="9" width="8.5" height="8" fill="#f8d400" stroke="#c08000" stroke-width="1"/><path d="M14 17.5 L18.5 25 H9.5Z" fill="none" stroke="#b06a30" stroke-width="1.2"/><path d="M25 3 H28.5 V6.5 M2.5 21.5 V25.5 H6" fill="none" stroke="#222" stroke-width="1.2"/></svg>
<svg style="left:741.5px;top:184.5px" width="9" height="9"><path d="M8.5 0.5 V8.5 H0.5Z" fill="#6a6a6a"/></svg>
<svg style="left:751.5px;top:160px" width="30" height="30" viewBox="0 0 30 30"><path d="M15 2.5 C8.5 2.5 6 7 6.5 11 C7 15 10.5 18 11 22 V26.5 H19 V22 C19.5 18 23 15 23.5 11 C24 7 21.5 2.5 15 2.5Z" fill="url(#rBulb)" stroke="#111" stroke-width="1.4"/><path d="M11.5 23.5 H18.5" stroke="#fff" stroke-width="2"/></svg>
<svg style="left:776.5px;top:184.5px" width="9" height="9"><path d="M8.5 0.5 V8.5 H0.5Z" fill="#6a6a6a"/></svg>
<svg style="left:786.5px;top:160px" width="30" height="30" viewBox="0 0 30 30"><path d="M11 12 V8.5 C11 4.5 19 4.5 19 8.5 V12" fill="none" stroke="#111" stroke-width="2"/><rect x="8" y="12" width="14.5" height="13" rx="1.5" fill="url(#gGr)" stroke="#111" stroke-width="1.4"/><path d="M10 16.5 H20.5 M10 20 H20.5" stroke="#8a8a8a" stroke-width="1.3"/></svg>
<svg style="left:811.5px;top:184.5px" width="9" height="9"><path d="M8.5 0.5 V8.5 H0.5Z" fill="#6a6a6a"/></svg>
<svg style="left:821.5px;top:160px" width="30" height="30" viewBox="0 0 30 30"><path d="M4.5 3.5 L26 8.5 L25 12 L16 26 L4.5 19Z" fill="#ff7a50" stroke="#111" stroke-width="1.2"/><path d="M4.5 13 L16 19.5 L25.5 12 V17 L16 23 L4.5 17.5Z" fill="#fff"/><path d="M16 19 L25.5 12" stroke="#e02020" stroke-width="2.5"/><path d="M4.5 16 L16 22.5 L25.5 16.5 V20.5 L16 26 L4.5 19.5Z" fill="#2a3a8a"/><path d="M5 17 L16 23.5" stroke="#8aa0e0" stroke-width="1"/></svg>
<svg style="left:846.5px;top:184.5px" width="9" height="9"><path d="M8.5 0.5 V8.5 H0.5Z" fill="#6a6a6a"/></svg>
<svg style="left:856.5px;top:160px" width="30" height="30" viewBox="0 0 30 30"><foreignObject x="3" y="2" width="25" height="25"><div style="width:25px;height:25px;border-radius:50%;background:conic-gradient(from 0deg,#ff3030,#ffcc00,#40ff40,#00ffff,#3030ff,#ff00ff,#ff3030);position:relative;box-shadow:0 0 0 1.2px #111 inset"><div style="position:absolute;left:7px;top:7px;width:11px;height:11px;border-radius:50%;background:#e6ecf3;box-shadow:0 0 2px #888"></div></div></foreignObject></svg>
<svg style="left:881.5px;top:184.5px" width="9" height="9"><path d="M8.5 0.5 V8.5 H0.5Z" fill="#6a6a6a"/></svg>
<svg style="left:891.5px;top:160px" width="30" height="30" viewBox="0 0 30 30"><circle cx="15.5" cy="15" r="10.8" fill="url(#rS)" stroke="#111" stroke-width="1.8"/><path d="M13 4.5 C11.5 10 11.5 20 14 25.5 M5 18 C10 20.5 21 20.5 26 17" fill="none" stroke="#111" stroke-width="1.2"/></svg>
<svg style="left:926.5px;top:160px" width="30" height="30" viewBox="0 0 30 30"><path d="M1.5 1 V30 M1 1.5 H30" stroke="#a9a9a9" stroke-width="1.3" stroke-dasharray="2 1"/><path d="M6.3 1 V30 M1 6.3 H30" stroke="#a9a9a9" stroke-width="1.3" stroke-dasharray="2 1"/><path d="M11.1 1 V30 M1 11.1 H30" stroke="#a9a9a9" stroke-width="1.3" stroke-dasharray="2 1"/><path d="M15.899999999999999 1 V30 M1 15.899999999999999 H30" stroke="#a9a9a9" stroke-width="1.3" stroke-dasharray="2 1"/><path d="M20.7 1 V30 M1 20.7 H30" stroke="#a9a9a9" stroke-width="1.3" stroke-dasharray="2 1"/><path d="M25.5 1 V30 M1 25.5 H30" stroke="#a9a9a9" stroke-width="1.3" stroke-dasharray="2 1"/><path d="M30.299999999999997 1 V30 M1 30.299999999999997 H30" stroke="#a9a9a9" stroke-width="1.3" stroke-dasharray="2 1"/><circle cx="15.3" cy="15" r="10.8" fill="url(#rS)" stroke="#111" stroke-width="1.8"/><path d="M13 4.5 C11.5 10 11.5 20 14 25.5 M5 18 C10 20.5 21 20.5 26 17" fill="none" stroke="#111" stroke-width="1.2"/></svg>
<svg style="left:951.5px;top:184.5px" width="9" height="9"><path d="M8.5 0.5 V8.5 H0.5Z" fill="#6a6a6a"/></svg>
<svg style="left:961.5px;top:160px" width="30" height="30" viewBox="0 0 30 30"><ellipse cx="16" cy="24" rx="12" ry="4" fill="#000" opacity="0.25"/><circle cx="15" cy="13.5" r="11" fill="url(#rBS)" stroke="#0a1050" stroke-width="1"/><ellipse cx="10" cy="8" rx="3" ry="2" fill="#cfe0ff" transform="rotate(-35 10 8)"/></svg>
<svg style="left:986.5px;top:184.5px" width="9" height="9"><path d="M8.5 0.5 V8.5 H0.5Z" fill="#6a6a6a"/></svg>
<svg style="left:996.5px;top:160px" width="30" height="30" viewBox="0 0 30 30"><path d="M13.5 6 L29 1.5 L25 17 Z" fill="#f59a18" stroke="#111" stroke-width="1.3" stroke-linejoin="round"/><path d="M13.5 6 C14 10 19 15 25 17" fill="#fff5d8" stroke="none"/><path d="M13.5 6 C15 9 21 14 25 17" fill="none" stroke="#222" stroke-width="1"/></svg>
<svg style="left:1021.5px;top:184.5px" width="9" height="9"><path d="M8.5 0.5 V8.5 H0.5Z" fill="#6a6a6a"/></svg>
<svg style="left:1031.5px;top:160px" width="30" height="30" viewBox="0 0 30 30"><path d="M12 4 H18 L19 8 L23 6 L27 10 L24 13 L28.5 15 V20 L24 21 L26 25 L22 27 L19 24 L17.5 28 H12.5 L11 24 L7 26 L3.5 22 L6 19 L1.5 17 V12 L6 11 L4 7 L8 4.5 L11 8Z" fill="#f0d070" stroke="#5a4a20" stroke-width="1.2"/><rect x="12.5" y="10" width="5" height="10" rx="2.5" fill="#9a9a9a"/></svg>
<svg style="left:1056.5px;top:184.5px" width="9" height="9"><path d="M8.5 0.5 V8.5 H0.5Z" fill="#6a6a6a"/></svg>
<svg style="left:1066.5px;top:160px" width="30" height="30" viewBox="0 0 30 30"><path d="M2 4 H15 M2 17.5 H15" stroke="#333" stroke-width="1.4"/><path d="M4 6 V15.5" stroke="#111" stroke-width="1"/><path d="M2 7 L4 4.5 L6 7Z M2 14.5 L4 17 L6 14.5Z" fill="#111"/><rect x="15" y="1.5" width="4" height="4" fill="#fff" stroke="#111" stroke-width="1.3"/><rect x="15" y="15" width="4" height="4" fill="#fff" stroke="#111" stroke-width="1.3"/><rect x="27.5" y="15" width="4" height="4" fill="#fff" stroke="#111" stroke-width="1.3"/><path d="M17 19 V29 M29.5 19 V29" stroke="#333" stroke-width="1.3"/><path d="M19 25.5 H27.5" stroke="#111" stroke-width="1"/><path d="M19.5 23.5 L17.8 25.5 L19.5 27.5Z M27 23.5 L28.7 25.5 L27 27.5Z" fill="#111"/></svg>
<svg style="left:1091.5px;top:184.5px" width="9" height="9"><path d="M8.5 0.5 V8.5 H0.5Z" fill="#6a6a6a"/></svg>
<svg style="left:1101.5px;top:160px" width="30" height="30" viewBox="0 0 30 30"><circle cx="15.4" cy="14.9" r="13" fill="url(#rG)" stroke="#111" stroke-width="1.6"/><path d="M3 20 C6 14 11 11 13 10 L14 16 C12 20 8 24 4 22 Z" fill="#111" opacity="0.75"/><path d="M11 3 V12 M13 18 C18 14 23 9 27 7 M11 22 C17 24 22 23 26 22" stroke="#222" stroke-width="0.8" fill="none"/></svg>
<svg style="left:1126.5px;top:184.5px" width="9" height="9"><path d="M8.5 0.5 V8.5 H0.5Z" fill="#6a6a6a"/></svg>
<svg style="left:1136.5px;top:160px" width="30" height="30" viewBox="0 0 30 30"><circle cx="15.4" cy="14.9" r="12" fill="url(#rH)"/><path d="M11 10.5 C11 6 20 6 20 10.5 C20 14 16 14.5 16 18" fill="none" stroke="#fff" stroke-width="3.2"/><circle cx="16" cy="22" r="1.8" fill="#fff"/></svg>
<svg style="left:1161.5px;top:184.5px" width="9" height="9"><path d="M8.5 0.5 V8.5 H0.5Z" fill="#6a6a6a"/></svg>
<svg style="left:1876px;top:138px" width="18" height="18" viewBox="0 0 18 18"><g fill="#cdd0d4"><circle cx="9" cy="9" r="5.5"/><rect x="7.3" y="1" width="3.4" height="4" transform="rotate(0 9 9)"/><rect x="7.3" y="1" width="3.4" height="4" transform="rotate(45 9 9)"/><rect x="7.3" y="1" width="3.4" height="4" transform="rotate(90 9 9)"/><rect x="7.3" y="1" width="3.4" height="4" transform="rotate(135 9 9)"/><rect x="7.3" y="1" width="3.4" height="4" transform="rotate(180 9 9)"/><rect x="7.3" y="1" width="3.4" height="4" transform="rotate(225 9 9)"/><rect x="7.3" y="1" width="3.4" height="4" transform="rotate(270 9 9)"/><rect x="7.3" y="1" width="3.4" height="4" transform="rotate(315 9 9)"/></g><circle cx="9" cy="9" r="2.4" fill="#d9dbdf"/></svg>
<svg style="left:3.5px;top:217.5px" width="30" height="30" viewBox="0 0 30 30"><path d="M9 5.5 V22.5 L13 18.5 L16.3 25.5 L19.5 24 L16.3 17.2 H21.5 Z" fill="#fff" stroke="#111" stroke-width="1.4" stroke-linejoin="round"/></svg>
<svg style="left:38.5px;top:217.5px" width="30" height="30" viewBox="0 0 30 30"><circle cx="14.5" cy="14.8" r="2.4" fill="#fff" stroke="#111" stroke-width="1.3"/></svg>
<svg style="left:64.0px;top:243.0px" width="9" height="9"><path d="M8.5 0.5 V8.5 H0.5Z" fill="#6a6a6a"/></svg>
<svg style="left:73.5px;top:217.5px" width="30" height="30" viewBox="0 0 30 30"><path d="M6.5 24.2 L13 7.7 L23.9 20.5" fill="none" stroke="#111" stroke-width="1.2"/><rect x="4.2" y="21.9" width="4.6" height="4.6" fill="#fff" stroke="#111" stroke-width="1.3"/><rect x="10.7" y="5.4" width="4.6" height="4.6" fill="#fff" stroke="#111" stroke-width="1.3"/><rect x="21.6" y="18.2" width="4.6" height="4.6" fill="#fff" stroke="#111" stroke-width="1.3"/></svg>
<svg style="left:99.0px;top:243.0px" width="9" height="9"><path d="M8.5 0.5 V8.5 H0.5Z" fill="#6a6a6a"/></svg>
<svg style="left:108.5px;top:217.5px" width="30" height="30" viewBox="0 0 30 30"><path d="M5.5 8 H12 C26 8 26 23 12 23 H5.5" fill="none" stroke="#111" stroke-width="1.3"/><rect x="3.2" y="5.7" width="4.6" height="4.6" fill="#fff" stroke="#111" stroke-width="1.3"/><rect x="20.6" y="1.9" width="4.6" height="4.6" fill="#fff" stroke="#111" stroke-width="1.3"/><rect x="3.2" y="20.5" width="4.6" height="4.6" fill="#fff" stroke="#111" stroke-width="1.3"/><rect x="23.0" y="23.2" width="4.6" height="4.6" fill="#fff" stroke="#111" stroke-width="1.3"/></svg>
<svg style="left:134.0px;top:243.0px" width="9" height="9"><path d="M8.5 0.5 V8.5 H0.5Z" fill="#6a6a6a"/></svg>
<svg style="left:3.5px;top:252.5px" width="30" height="30" viewBox="0 0 30 30"><circle cx="15.3" cy="14.5" r="11.3" fill="none" stroke="#111" stroke-width="1.3"/><path d="M15.3 14.5 L23 7" stroke="#444" stroke-width="0.9"/><rect x="13.0" y="12.2" width="4.6" height="4.6" fill="#fff" stroke="#111" stroke-width="1.3"/><rect x="20.7" y="4.7" width="4.6" height="4.6" fill="#fff" stroke="#111" stroke-width="1.3"/></svg>
<svg style="left:29.0px;top:278.0px" width="9" height="9"><path d="M8.5 0.5 V8.5 H0.5Z" fill="#6a6a6a"/></svg>
<svg style="left:38.5px;top:252.5px" width="30" height="30" viewBox="0 0 30 30"><ellipse cx="15.5" cy="16.5" rx="12.5" ry="8.2" fill="none" stroke="#111" stroke-width="1.3"/><path d="M15.5 7.4 V16.5 H27" stroke="#444" stroke-width="0.9" fill="none"/><rect x="13.2" y="14.2" width="4.6" height="4.6" fill="#fff" stroke="#111" stroke-width="1.3"/><rect x="13.2" y="5.1" width="4.6" height="4.6" fill="#fff" stroke="#111" stroke-width="1.3"/><rect x="24.7" y="14.2" width="4.6" height="4.6" fill="#fff" stroke="#111" stroke-width="1.3"/></svg>
<svg style="left:64.0px;top:278.0px" width="9" height="9"><path d="M8.5 0.5 V8.5 H0.5Z" fill="#6a6a6a"/></svg>
<svg style="left:73.5px;top:252.5px" width="30" height="30" viewBox="0 0 30 30"><path d="M6.5 5.4 C15 5.5 21 10 24.1 15.5" fill="none" stroke="#111" stroke-width="1.3"/><path d="M6.5 5.4 V25.5 L24.1 15.5" fill="none" stroke="#444" stroke-width="0.9"/><rect x="4.2" y="3.1" width="4.6" height="4.6" fill="#fff" stroke="#111" stroke-width="1.3"/><rect x="21.8" y="13.2" width="4.6" height="4.6" fill="#fff" stroke="#111" stroke-width="1.3"/><rect x="4.2" y="23.2" width="4.6" height="4.6" fill="#fff" stroke="#111" stroke-width="1.3"/></svg>
<svg style="left:99.0px;top:278.0px" width="9" height="9"><path d="M8.5 0.5 V8.5 H0.5Z" fill="#6a6a6a"/></svg>
<svg style="left:108.5px;top:252.5px" width="30" height="30" viewBox="0 0 30 30"><rect x="4.7" y="8.9" width="21.5" height="13.3" fill="none" stroke="#111" stroke-width="1.3"/><rect x="23.9" y="6.6" width="4.6" height="4.6" fill="#fff" stroke="#111" stroke-width="1.3"/><rect x="2.4" y="19.9" width="4.6" height="4.6" fill="#fff" stroke="#111" stroke-width="1.3"/></svg>
<svg style="left:134.0px;top:278.0px" width="9" height="9"><path d="M8.5 0.5 V8.5 H0.5Z" fill="#6a6a6a"/></svg>
<svg style="left:3.5px;top:287.5px" width="30" height="30" viewBox="0 0 30 30"><path d="M4.6 14.7 L9.8 6.1 H20.8 L26 14.7 L20.8 23.9 H9.8 Z" fill="none" stroke="#111" stroke-width="1.2"/><path d="M15.3 14.7 H24.5" stroke="#444" stroke-width="0.9"/><rect x="13.0" y="12.4" width="4.6" height="4.6" fill="#fff" stroke="#111" stroke-width="1.3"/><rect x="22.2" y="12.4" width="4.6" height="4.6" fill="#fff" stroke="#111" stroke-width="1.3"/></svg>
<svg style="left:29.0px;top:313.0px" width="9" height="9"><path d="M8.5 0.5 V8.5 H0.5Z" fill="#6a6a6a"/></svg>
<svg style="left:38.5px;top:287.5px" width="30" height="30" viewBox="0 0 30 30"><path d="M5 5.5 H23 V21" fill="none" stroke="#999" stroke-width="0.8"/><path d="M5.1 5.5 H13 C20 5.5 25 11 25.2 23.9" fill="none" stroke="#111" stroke-width="2"/><rect x="2.8" y="3.2" width="4.6" height="4.6" fill="#fff" stroke="#111" stroke-width="1.3"/><rect x="22.9" y="21.6" width="4.6" height="4.6" fill="#fff" stroke="#111" stroke-width="1.3"/></svg>
<svg style="left:64.0px;top:313.0px" width="9" height="9"><path d="M8.5 0.5 V8.5 H0.5Z" fill="#6a6a6a"/></svg>
<svg style="left:73.5px;top:287.5px" width="30" height="30" viewBox="0 0 30 30"><path d="M10.1 5.5 L25.4 5.5 L18.8 25.5 L5.2 18.8 Z" fill="url(#rBlu)" stroke="#111" stroke-width="1.3"/><path d="M17.7 5.5 L12 22.2 M7.6 12 L22 15.5" stroke="#1a2a70" stroke-width="1"/><rect x="7.8" y="3.2" width="4.6" height="4.6" fill="#fff" stroke="#111" stroke-width="1.3"/><rect x="23.1" y="3.2" width="4.6" height="4.6" fill="#fff" stroke="#111" stroke-width="1.3"/><rect x="16.5" y="23.2" width="4.6" height="4.6" fill="#fff" stroke="#111" stroke-width="1.3"/><rect x="2.9" y="16.5" width="4.6" height="4.6" fill="#fff" stroke="#111" stroke-width="1.3"/></svg>
<svg style="left:99.0px;top:313.0px" width="9" height="9"><path d="M8.5 0.5 V8.5 H0.5Z" fill="#6a6a6a"/></svg>
<svg style="left:108.5px;top:287.5px" width="30" height="30" viewBox="0 0 30 30"><path d="M5 6 L13 2 C20 3 26 6 27 12 V20 L17 27 V18 C17 14 14 10 5 6Z" fill="url(#gBl)" stroke="#111" stroke-width="1.2"/><path d="M5 6 L13 2 L17 8 C14 7 10 6.5 5 6Z" fill="#fff"/><path d="M17 18 L27 13 V20 L17 27Z" fill="#fff" stroke="#111" stroke-width="1"/></svg>
<svg style="left:134.0px;top:313.0px" width="9" height="9"><path d="M8.5 0.5 V8.5 H0.5Z" fill="#6a6a6a"/></svg>
<svg style="left:3.5px;top:322.5px" width="30" height="30" viewBox="0 0 30 30"><path d="M4.6 7.5 L14 3.1 L25.5 7.5 V21.5 L14 26.1 L4.6 21.5 Z" fill="#5a78e8" stroke="#111" stroke-width="1.4" stroke-linejoin="round"/><path d="M4.6 7.5 L14 3.1 L25.5 7.5 L15.5 12 Z" fill="#b8c6ff"/><path d="M15.5 12 L25.5 7.5 V21.5 L14 26.1Z" fill="#3048b8"/><path d="M4.6 7.5 L15.5 12 L25.5 7.5 M15.5 12 L14 26.1" stroke="#1a2260" stroke-width="0.8" fill="none"/></svg>
<svg style="left:29.0px;top:348.0px" width="9" height="9"><path d="M8.5 0.5 V8.5 H0.5Z" fill="#6a6a6a"/></svg>
<svg style="left:38.5px;top:322.5px" width="30" height="30" viewBox="0 0 30 30"><circle cx="20.1" cy="10.3" r="7.8" fill="url(#rBlu)" stroke="#111" stroke-width="1.3"/><path d="M19 2.8 C17.5 7 17.5 13 19 18 M12.5 11 C16 13 23 13 27.5 11" fill="none" stroke="#1a2a70" stroke-width="0.8"/><circle cx="10.4" cy="20.5" r="8.2" fill="url(#rBlu)" stroke="#111" stroke-width="1.3"/><path d="M9.5 12.5 C8 17 8 23 9.5 28.5 M2.5 21 C6 23 14 23 18.5 21" fill="none" stroke="#1a2a70" stroke-width="0.8"/></svg>
<svg style="left:64.0px;top:348.0px" width="9" height="9"><path d="M8.5 0.5 V8.5 H0.5Z" fill="#6a6a6a"/></svg>
<svg style="left:73.5px;top:322.5px" width="30" height="30" viewBox="0 0 30 30"><ellipse cx="15.2" cy="5.7" rx="6.3" ry="3.2" fill="none" stroke="#111" stroke-width="1.2"/><path d="M2 12.3 C10 16 20 16 29.5 12.3 V25.5 C20 29.5 10 29.5 2 25.5 Z" fill="url(#gBl)" stroke="#111" stroke-width="1.3"/><ellipse cx="15.5" cy="21" rx="5.5" ry="2.6" fill="none" stroke="#fff" stroke-width="1.6"/></svg>
<svg style="left:99.0px;top:348.0px" width="9" height="9"><path d="M8.5 0.5 V8.5 H0.5Z" fill="#6a6a6a"/></svg>
<svg style="left:108.5px;top:322.5px" width="30" height="30" viewBox="0 0 30 30"><path d="M3 20 C6 14 9 10 12 4 C17 5 22 7 27 6.5 C25 12 22 17 19.5 24 C14 22 8 21 3 20Z" fill="url(#rBlu)" stroke="#111" stroke-width="1.3"/><path d="M7.5 12 C12 13 18 14 25 13 M15.5 5.5 C14 11 12.5 17 11 22 M4 19.5 L19 6 M12 4.5 L20 23" stroke="#1a2a70" stroke-width="0.8" fill="none"/></svg>
<svg style="left:134.0px;top:348.0px" width="9" height="9"><path d="M8.5 0.5 V8.5 H0.5Z" fill="#6a6a6a"/></svg>
<svg style="left:3.5px;top:357.5px" width="30" height="30" viewBox="0 0 30 30"><path d="M-5 -5 H-1.5 C-1.5 -7.5 1.5 -7.5 1.5 -5 H5 V-1.5 C7.5 -1.5 7.5 1.5 5 1.5 V5 H1.5 C1.5 2.8 -1.5 2.8 -1.5 5 H-5 V1.5 C-2.8 1.5 -2.8 -1.5 -5 -1.5 Z" transform="translate(10.5 10) rotate(-35) scale(1.4)" fill="#f5a800" stroke="#111" stroke-width="1"/><path d="M-5 -5 H-1.5 C-1.5 -7.5 1.5 -7.5 1.5 -5 H5 V-1.5 C7.5 -1.5 7.5 1.5 5 1.5 V5 H1.5 C1.5 2.8 -1.5 2.8 -1.5 5 H-5 V1.5 C-2.8 1.5 -2.8 -1.5 -5 -1.5 Z" transform="translate(20.2 20.2) rotate(55) scale(1.4)" fill="#fff" stroke="#111" stroke-width="1"/></svg>
<svg style="left:29.0px;top:383.0px" width="9" height="9"><path d="M8.5 0.5 V8.5 H0.5Z" fill="#6a6a6a"/></svg>
<svg style="left:38.5px;top:357.5px" width="30" height="30" viewBox="0 0 30 30"><path d="M1.5 29.5 V13.5 L6.5 4 L8 19 L24.5 3.5 L15 21 L25 18.5 L19 24.5 L17.8 27 L15.5 25.5 L15 29.5 Z" fill="#f58a10" stroke="#111" stroke-width="1"/><path d="M1.5 29.5 V14 L7.5 20.5 L15 29.5Z" fill="#ffaa00"/></svg>
<svg style="left:73.5px;top:357.5px" width="30" height="30" viewBox="0 0 30 30"><rect x="1.8" y="14.9" width="12.7" height="6.1" fill="#fff" stroke="#111" stroke-width="1.2"/><path d="M14.5 4.5 H22.6 L14.5 19.5 Z" fill="#1a2a88"/><path d="M15.5 21 L19 17.5 L26.5 25 L23 28.5 Z" fill="#fff" stroke="#111" stroke-width="1.2"/></svg>
<svg style="left:108.5px;top:357.5px" width="30" height="30" viewBox="0 0 30 30"><rect x="3.5" y="16.8" width="22.7" height="6.9" fill="#fff" stroke="#111" stroke-width="1.2"/><path d="M16.2 6.8 H23.9 L16.2 23.5 Z" fill="#1a2a88"/></svg>
<svg style="left:3.5px;top:392.5px" width="30" height="30" viewBox="0 0 30 30"><g stroke="#111" stroke-width="3.2"><circle cx="15.5" cy="10.7" r="5"/><circle cx="10.8" cy="18.5" r="5"/><circle cx="20.5" cy="18.5" r="5"/></g><circle cx="15.5" cy="10.7" r="4.3" fill="#6a88ee"/><circle cx="20.5" cy="18.5" r="4.3" fill="#1a2a80"/><circle cx="10.8" cy="18.5" r="4.3" fill="#fff"/></svg>
<svg style="left:29.0px;top:418.0px" width="9" height="9"><path d="M8.5 0.5 V8.5 H0.5Z" fill="#6a6a6a"/></svg>
<svg style="left:38.5px;top:392.5px" width="30" height="30" viewBox="0 0 30 30"><circle cx="15.4" cy="10.4" r="4.6" fill="#6a88ee" stroke="#111" stroke-width="1.2"/><circle cx="9" cy="20.4" r="4.6" fill="#fff" stroke="#111" stroke-width="1.2"/><circle cx="21.8" cy="20.4" r="4.6" fill="#1a2a80" stroke="#111" stroke-width="1.2"/></svg>
<svg style="left:73.5px;top:392.5px" width="30" height="30" viewBox="0 0 30 30"><path d="M2.5 10.5 C12 7 21 14 21.5 28.1" fill="none" stroke="#111" stroke-width="2"/><rect x="7.1" y="7.2" width="4" height="4" fill="#fff" stroke="#111" stroke-width="1.3"/><rect x="19.9" y="19.5" width="4" height="4" fill="#fff" stroke="#111" stroke-width="1.3"/></svg>
<svg style="left:108.5px;top:392.5px" width="30" height="30" viewBox="0 0 30 30"><path d="M2.3 10.5 C12 8 21.5 15 21.6 28.1" fill="none" stroke="#111" stroke-width="2.2"/><path d="M2 4 H10 M14 5 C20 8 25 14 26.6 19 M26.6 22 V29" fill="none" stroke="#111" stroke-width="1" stroke-dasharray="1.4 1.4"/><rect x="9.6" y="1.8" width="4" height="4" fill="#fff" stroke="#111" stroke-width="1.3"/><rect x="24.6" y="17.2" width="4" height="4" fill="#fff" stroke="#111" stroke-width="1.3"/></svg>
<svg style="left:134.0px;top:418.0px" width="9" height="9"><path d="M8.5 0.5 V8.5 H0.5Z" fill="#6a6a6a"/></svg>
<svg style="left:3.5px;top:427.5px" width="30" height="30" viewBox="0 0 30 30"><path d="M4.3 4.5 L6.5 2.1 L25.5 7.5 V15 L22 14 L20.5 10.5 L17.5 10 L15 23.5 L18.5 24.5 L17 28.7 L8.5 26.2 L10 22.5 L11.5 22.5 L13.5 9.5 L9.5 8.5 L7.5 12 L4.3 11 Z" fill="#5f80ee" stroke="#111" stroke-width="1.4" stroke-linejoin="round"/><path d="M6.5 2.1 L25.5 7.5" stroke="#c8d2ff" stroke-width="1.5"/></svg>
<svg style="left:38.5px;top:427.5px" width="30" height="30" viewBox="0 0 30 30"><rect x="4.8" y="18.7" width="7.7" height="7.3" fill="url(#gW)" stroke="#111" stroke-width="1.4"/><rect x="19.8" y="3.3" width="7.7" height="7.7" fill="url(#rBlu)" stroke="#111" stroke-width="1.4"/><path d="M12.5 18.5 L17.5 13.5" stroke="#111" stroke-width="1.1"/><path d="M18.8 12.2 L14.6 13.4 L17.6 16.4Z" fill="#111"/></svg>
<svg style="left:64.0px;top:453.0px" width="9" height="9"><path d="M8.5 0.5 V8.5 H0.5Z" fill="#6a6a6a"/></svg>
<svg style="left:73.5px;top:427.5px" width="30" height="30" viewBox="0 0 30 30"><rect x="4.9" y="3.7" width="7.2" height="7.2" fill="url(#rBlu)" stroke="#111" stroke-width="1.3"/><rect x="19.9" y="7.1" width="7.2" height="7.2" fill="url(#rBlu)" stroke="#111" stroke-width="1.3"/><rect x="14.9" y="11" width="7.2" height="7.2" fill="url(#rBlu)" stroke="#111" stroke-width="1.3"/><rect x="4.9" y="18.3" width="7.2" height="7.2" fill="url(#gW)" stroke="#111" stroke-width="1.3"/><rect x="19.9" y="21" width="7.2" height="7.2" fill="url(#rBlu)" stroke="#111" stroke-width="1.3"/></svg>
<svg style="left:108.5px;top:427.5px" width="30" height="30" viewBox="0 0 30 30"><rect x="1.9" y="3.3" width="7.3" height="17.7" fill="url(#gW)" stroke="#111" stroke-width="1.3"/><path d="M9.5 5 C14 4.5 19 6.5 20 11" fill="none" stroke="#111" stroke-width="1"/><path d="M17.5 10 L20.2 12.5 L21.5 9Z" fill="#111"/><path d="M11.5 21.4 L25 10 L28.1 13.7 L14.6 25.2Z" fill="#6a88ee" stroke="#111" stroke-width="1.3"/></svg>
<svg style="left:3.5px;top:462.5px" width="30" height="30" viewBox="0 0 30 30"><path d="M4.7 9 L14 3.4 L26.3 7.5 V21 L16 27.3 L4.7 22 Z" fill="#5a78e8" stroke="#111" stroke-width="1.4" stroke-linejoin="round"/><path d="M4.7 9 L14 3.4 L26.3 7.5 L17 12.5Z" fill="#b8c6ff"/><path d="M17 12.5 L26.3 7.5 V21 L16 27.3Z" fill="#3048b8"/><path d="M8.5 16 V24 L16 27.3 L21.5 24 V16.5 L16 19.5Z" fill="#fff" stroke="#111" stroke-width="1"/></svg>
<svg style="left:29.0px;top:488.0px" width="9" height="9"><path d="M8.5 0.5 V8.5 H0.5Z" fill="#6a6a6a"/></svg>
<svg style="left:38.5px;top:462.5px" width="30" height="30" viewBox="0 0 30 30"><path d="M2.1 23.8 L8 17 H29.1 L23 23.8 Z" fill="#8aa0f0" stroke="#111" stroke-width="1.5"/><path d="M8 17.5 H28" stroke="#111" stroke-width="1.5" stroke-dasharray="2.5 2"/><path d="M7.9 19 V8" stroke="#fff" stroke-width="1.6"/><path d="M5.7 9 L7.9 4.9 L10.100000000000001 9Z" fill="#fff"/><path d="M15.5 19 V8" stroke="#fff" stroke-width="1.6"/><path d="M13.3 9 L15.5 4.9 L17.7 9Z" fill="#fff"/><path d="M23.3 19 V8" stroke="#fff" stroke-width="1.6"/><path d="M21.1 9 L23.3 4.9 L25.5 9Z" fill="#fff"/></svg>
<svg style="left:64.0px;top:488.0px" width="9" height="9"><path d="M8.5 0.5 V8.5 H0.5Z" fill="#6a6a6a"/></svg>
<svg style="left:73.5px;top:462.5px" width="30" height="30" viewBox="0 0 30 30"><rect x="4.3" y="4.4" width="4.6" height="4.6" fill="#8aa0f0" stroke="#111" stroke-width="1.5"/><rect x="13.2" y="4.4" width="4.6" height="4.6" fill="#8aa0f0" stroke="#111" stroke-width="1.5"/><rect x="22.1" y="4.4" width="4.6" height="4.6" fill="#8aa0f0" stroke="#111" stroke-width="1.5"/><rect x="4.3" y="13.3" width="4.6" height="4.6" fill="#8aa0f0" stroke="#111" stroke-width="1.5"/><rect x="13.2" y="13.3" width="4.6" height="4.6" fill="#8aa0f0" stroke="#111" stroke-width="1.5"/><rect x="22.1" y="13.3" width="4.6" height="4.6" fill="#8aa0f0" stroke="#111" stroke-width="1.5"/><rect x="4.3" y="22.2" width="4.6" height="4.6" fill="#fff" stroke="#111" stroke-width="1.5"/><rect x="13.2" y="22.2" width="4.6" height="4.6" fill="#8aa0f0" stroke="#111" stroke-width="1.5"/><rect x="22.1" y="22.2" width="4.6" height="4.6" fill="#8aa0f0" stroke="#111" stroke-width="1.5"/></svg>
<svg style="left:99.0px;top:488.0px" width="9" height="9"><path d="M8.5 0.5 V8.5 H0.5Z" fill="#6a6a6a"/></svg>
<svg style="left:108.5px;top:462.5px" width="30" height="30" viewBox="0 0 30 30"><rect x="9.6" y="4" width="11.6" height="5.5" fill="#fff" stroke="#111" stroke-width="1.3"/><rect x="11.5" y="13" width="7.5" height="5" fill="#fff" stroke="#111" stroke-width="1.3"/><rect x="10.5" y="21.5" width="9.5" height="5.5" fill="#fff" stroke="#111" stroke-width="1.3"/><path d="M15.4 1.9 V28.9" stroke="#c02020" stroke-width="1.6"/></svg>
<svg style="left:134.0px;top:488.0px" width="9" height="9"><path d="M8.5 0.5 V8.5 H0.5Z" fill="#6a6a6a"/></svg>
<svg style="left:3.5px;top:497.5px" width="30" height="30" viewBox="0 0 30 30"><path d="M4.7 5.5 L10 2.9 L14.7 5 V25.3 L4.7 21 Z" fill="url(#gW)" stroke="#111" stroke-width="1.2"/><path d="M10.8 23 L19 7 L26.3 9.1 L18 26 Z" fill="#6a88ee" stroke="#111" stroke-width="1.3"/><path d="M19 7 L22 5.5 L26.3 9.1" fill="#c8d2ff" stroke="#111" stroke-width="1"/></svg>
<svg style="left:29.0px;top:523.0px" width="9" height="9"><path d="M8.5 0.5 V8.5 H0.5Z" fill="#6a6a6a"/></svg>
<svg style="left:38.5px;top:497.5px" width="30" height="30" viewBox="0 0 30 30"><rect x="9" y="1.7" width="5" height="27.4" fill="#8aa0f0" stroke="#111" stroke-width="1.2"/><circle cx="2.9" cy="9.1" r="2.4" fill="#111"/><circle cx="20.6" cy="9.1" r="2.4" fill="#111"/><path d="M2 13.5 L14 13.5 M3 13.5 L4.5 19.5 L10 19.5 M13 13.5 L22 13.5 L25 17.5 L22.5 21 L27 27.5" fill="none" stroke="#111" stroke-width="2"/></svg>
<svg style="left:64.0px;top:523.0px" width="9" height="9"><path d="M8.5 0.5 V8.5 H0.5Z" fill="#6a6a6a"/></svg>
<svg style="left:73.5px;top:497.5px" width="30" height="30" viewBox="0 0 30 30"><path d="M3.7 17.5 L6.5 15.5 L8.9 21 C13 14 19 8 27.3 4.1 C20 10 14 17 9.5 26.4 Z" fill="#111"/></svg>
<svg style="left:99.0px;top:523.0px" width="9" height="9"><path d="M8.5 0.5 V8.5 H0.5Z" fill="#6a6a6a"/></svg>
<svg style="left:108.5px;top:497.5px" width="30" height="30" viewBox="0 0 30 30"><path d="M3.5 8.5 L9 5.6 L17 7.5 V19.5 L11 22.2 L3.5 19.5Z" fill="#d8d8d8" stroke="#111" stroke-width="1.2"/><path d="M3.5 8.5 L9 5.6 L17 7.5 L11 10.5Z" fill="#f0f0f0" stroke="#111" stroke-width="0.8"/><path d="M11 10.5 V22.2" stroke="#111" stroke-width="0.8"/><path d="M20.4 7.1 L15.2 21.5 C16 24.5 26 24.5 27.2 21.5 Z" fill="url(#rS)" stroke="#111" stroke-width="1.2"/></svg>
<svg style="left:134.0px;top:523.0px" width="9" height="9"><path d="M8.5 0.5 V8.5 H0.5Z" fill="#6a6a6a"/></svg>
<svg style="left:3.5px;top:532.5px" width="30" height="30" viewBox="0 0 30 30"><path d="M12 10 L15 6 C17 4 20 3 24 3.5 L26.5 3.5 V8 L20 8.5 L15.5 11 Z" fill="#fff" stroke="#111" stroke-width="1"/><path d="M12.5 9 L15 6.5 M13.5 10 L16 7.5 M14.5 11 L17 8.5" stroke="#444" stroke-width="0.6"/><rect x="26.5" y="1.5" width="2.8" height="7.5" fill="#111"/><path d="M14.7 11.9 L4.7 24.2 L17 28.5 L25.1 21.9 Z" fill="#e8c040" stroke="#111" stroke-width="1.3" stroke-linejoin="round"/><path d="M14.7 11.9 L17 28.5 L25.1 21.9Z" fill="#c9a020"/><path d="M14.7 11.9 L17 28.5" stroke="#a07a10" stroke-width="0.6"/></svg>
<svg style="left:29.0px;top:558.0px" width="9" height="9"><path d="M8.5 0.5 V8.5 H0.5Z" fill="#6a6a6a"/></svg>
<svg style="left:153px;top:205px" width="1576" height="810" viewBox="153 205 1576 810">
<defs>
<pattern id="pP" x="0" y="0" width="88.20" height="87.30" patternUnits="userSpaceOnUse"><rect width="88.20" height="87.30" fill="#c8aec8"/><g fill="#fff5ff" stroke="#2e2232" stroke-width="0.6"><circle cx="1.0" cy="53.6" r="3.5"/><circle cx="89.2" cy="53.6" r="3.5"/><circle cx="44.5" cy="53.9" r="3.9"/><circle cx="44.6" cy="-1.1" r="3.3"/><circle cx="44.6" cy="86.2" r="3.3"/><circle cx="13.1" cy="44.7" r="3.5"/><circle cx="71.4" cy="6.7" r="3.4"/><circle cx="52.4" cy="49.0" r="3.8"/><circle cx="51.6" cy="1.1" r="3.3"/><circle cx="51.6" cy="88.4" r="3.3"/><circle cx="10.2" cy="48.5" r="3.1"/><circle cx="2.5" cy="16.1" r="3.5"/><circle cx="90.7" cy="16.1" r="3.5"/><circle cx="25.0" cy="33.4" r="3.8"/><circle cx="78.0" cy="81.1" r="3.1"/><circle cx="28.8" cy="40.8" r="3.6"/><circle cx="54.0" cy="28.4" r="3.0"/><circle cx="25.5" cy="0.7" r="3.8"/><circle cx="25.5" cy="88.0" r="3.8"/><circle cx="76.6" cy="21.1" r="4.0"/><circle cx="65.6" cy="48.7" r="3.3"/><circle cx="46.7" cy="4.4" r="3.0"/><circle cx="79.7" cy="37.9" r="3.4"/><circle cx="22.0" cy="58.9" r="3.1"/><circle cx="33.1" cy="8.6" r="3.5"/><circle cx="22.6" cy="35.1" r="3.5"/><circle cx="46.4" cy="59.2" r="3.0"/><circle cx="-3.7" cy="70.2" r="3.4"/><circle cx="84.5" cy="70.2" r="3.4"/><circle cx="35.4" cy="50.2" r="3.0"/><circle cx="-0.1" cy="0.1" r="3.1"/><circle cx="-0.1" cy="87.4" r="3.1"/><circle cx="88.1" cy="0.1" r="3.1"/><circle cx="88.1" cy="87.4" r="3.1"/><circle cx="78.8" cy="70.0" r="3.9"/><circle cx="55.7" cy="21.2" r="3.9"/><circle cx="82.0" cy="65.3" r="3.2"/><circle cx="21.9" cy="4.9" r="3.2"/><circle cx="44.7" cy="77.1" r="3.6"/><circle cx="15.7" cy="5.8" r="3.7"/><circle cx="29.1" cy="59.0" r="3.3"/><circle cx="61.0" cy="16.3" r="3.4"/><circle cx="47.9" cy="69.8" r="3.5"/><circle cx="19.7" cy="66.4" r="3.3"/><circle cx="16.2" cy="38.2" r="3.9"/><circle cx="4.5" cy="17.1" r="3.5"/><circle cx="92.7" cy="17.1" r="3.5"/><circle cx="15.5" cy="82.3" r="3.7"/><circle cx="14.8" cy="17.5" r="3.3"/><circle cx="51.6" cy="43.5" r="3.2"/><circle cx="16.0" cy="39.6" r="3.9"/><circle cx="0.3" cy="65.5" r="3.9"/><circle cx="88.5" cy="65.5" r="3.9"/><circle cx="45.4" cy="37.5" r="3.8"/><circle cx="66.3" cy="81.9" r="3.0"/><circle cx="79.1" cy="76.8" r="3.5"/><circle cx="75.5" cy="33.5" r="3.8"/><circle cx="67.2" cy="6.3" r="3.3"/><circle cx="75.1" cy="44.3" r="3.2"/><circle cx="56.3" cy="54.5" r="3.4"/><circle cx="10.3" cy="16.7" r="3.6"/><circle cx="0.1" cy="76.2" r="3.6"/><circle cx="88.3" cy="76.2" r="3.6"/><circle cx="0.6" cy="33.2" r="3.5"/><circle cx="88.8" cy="33.2" r="3.5"/><circle cx="10.1" cy="80.9" r="3.5"/><circle cx="40.8" cy="66.8" r="3.4"/><circle cx="30.5" cy="-0.5" r="3.9"/><circle cx="30.5" cy="86.8" r="3.9"/><circle cx="49.4" cy="33.1" r="3.4"/><circle cx="18.4" cy="42.9" r="3.9"/><circle cx="28.7" cy="49.5" r="3.9"/><circle cx="45.2" cy="1.3" r="3.6"/><circle cx="45.2" cy="88.6" r="3.6"/><circle cx="41.4" cy="48.4" r="3.9"/><circle cx="3.9" cy="81.7" r="3.6"/><circle cx="92.1" cy="81.7" r="3.6"/><circle cx="3.0" cy="6.3" r="3.9"/><circle cx="91.2" cy="6.3" r="3.9"/><circle cx="40.5" cy="4.8" r="3.5"/><circle cx="13.5" cy="22.1" r="3.4"/><circle cx="77.7" cy="27.4" r="4.0"/><circle cx="67.5" cy="35.4" r="3.7"/><circle cx="50.7" cy="64.3" r="3.8"/><circle cx="38.1" cy="43.6" r="3.1"/><circle cx="11.7" cy="54.4" r="3.9"/><circle cx="75.7" cy="55.3" r="3.4"/><circle cx="29.0" cy="16.0" r="3.2"/><circle cx="81.8" cy="8.3" r="3.1"/><circle cx="21.4" cy="15.8" r="3.8"/><circle cx="-1.0" cy="11.2" r="4.0"/><circle cx="87.2" cy="11.2" r="4.0"/><circle cx="7.3" cy="55.1" r="3.8"/><circle cx="62.3" cy="77.6" r="3.8"/><circle cx="63.5" cy="32.5" r="3.8"/><circle cx="4.2" cy="71.9" r="3.1"/><circle cx="7.0" cy="33.7" r="3.9"/><circle cx="78.1" cy="60.1" r="3.9"/><circle cx="46.1" cy="28.3" r="3.9"/><circle cx="81.3" cy="75.4" r="3.9"/><circle cx="65.8" cy="71.2" r="3.5"/><circle cx="38.9" cy="54.5" r="3.2"/><circle cx="7.3" cy="-0.1" r="3.4"/><circle cx="7.3" cy="87.2" r="3.4"/><circle cx="62.1" cy="10.7" r="3.9"/><circle cx="27.8" cy="37.0" r="3.4"/><circle cx="56.3" cy="77.4" r="3.8"/><circle cx="32.4" cy="32.9" r="3.1"/><circle cx="30.1" cy="40.9" r="3.9"/><circle cx="-3.8" cy="15.6" r="3.8"/><circle cx="84.4" cy="15.6" r="3.8"/><circle cx="62.8" cy="66.2" r="3.1"/><circle cx="62.3" cy="55.5" r="3.7"/><circle cx="47.3" cy="82.3" r="3.6"/><circle cx="28.3" cy="70.5" r="3.5"/><circle cx="18.7" cy="20.9" r="3.1"/><circle cx="32.3" cy="76.7" r="3.6"/><circle cx="65.2" cy="35.4" r="3.2"/><circle cx="-3.0" cy="37.8" r="3.2"/><circle cx="85.2" cy="37.8" r="3.2"/><circle cx="52.8" cy="80.8" r="3.9"/><circle cx="30.8" cy="43.4" r="3.1"/><circle cx="60.7" cy="5.2" r="3.1"/><circle cx="75.0" cy="76.9" r="3.4"/><circle cx="80.9" cy="33.3" r="3.6"/><circle cx="73.5" cy="59.0" r="3.5"/><circle cx="55.8" cy="11.3" r="3.9"/><circle cx="-3.4" cy="49.8" r="3.7"/><circle cx="84.8" cy="49.8" r="3.7"/><circle cx="40.1" cy="26.2" r="3.1"/><circle cx="57.8" cy="65.5" r="3.7"/><circle cx="-2.6" cy="28.2" r="3.5"/><circle cx="85.6" cy="28.2" r="3.5"/><circle cx="-0.9" cy="43.6" r="3.5"/><circle cx="87.3" cy="43.6" r="3.5"/><circle cx="34.2" cy="15.3" r="3.0"/><circle cx="8.4" cy="59.9" r="3.2"/><circle cx="80.7" cy="42.8" r="3.2"/><circle cx="46.6" cy="16.6" r="3.7"/><circle cx="30.5" cy="9.9" r="3.8"/><circle cx="72.9" cy="49.2" r="3.4"/><circle cx="79.7" cy="17.1" r="3.0"/><circle cx="62.2" cy="75.1" r="3.4"/><circle cx="-2.0" cy="5.2" r="3.5"/><circle cx="86.2" cy="5.2" r="3.5"/><circle cx="55.7" cy="42.5" r="3.9"/><circle cx="2.0" cy="38.4" r="4.0"/><circle cx="90.2" cy="38.4" r="4.0"/><circle cx="69.5" cy="65.5" r="3.3"/><circle cx="63.7" cy="6.2" r="3.4"/><circle cx="48.2" cy="38.6" r="3.6"/><circle cx="34.2" cy="38.6" r="4.0"/><circle cx="22.1" cy="79.1" r="3.7"/><circle cx="22.8" cy="79.6" r="3.1"/><circle cx="35.5" cy="6.0" r="3.1"/><circle cx="38.5" cy="10.1" r="3.1"/><circle cx="3.0" cy="48.0" r="3.7"/><circle cx="91.2" cy="48.0" r="3.7"/><circle cx="19.9" cy="33.6" r="3.7"/><circle cx="-0.4" cy="55.7" r="3.7"/><circle cx="87.8" cy="55.7" r="3.7"/><circle cx="71.7" cy="15.5" r="3.8"/><circle cx="38.1" cy="32.5" r="3.1"/><circle cx="41.0" cy="82.5" r="3.4"/><circle cx="24.5" cy="66.3" r="3.9"/><circle cx="69.9" cy="32.9" r="3.7"/><circle cx="24.1" cy="22.9" r="3.5"/><circle cx="81.4" cy="11.8" r="3.3"/><circle cx="54.2" cy="5.2" r="3.1"/><circle cx="72.6" cy="81.0" r="3.8"/><circle cx="58.7" cy="29.5" r="3.9"/><circle cx="79.0" cy="49.7" r="3.8"/><circle cx="0.6" cy="22.9" r="3.7"/><circle cx="88.8" cy="22.9" r="3.7"/><circle cx="79.7" cy="5.4" r="3.9"/><circle cx="57.1" cy="0.3" r="3.2"/><circle cx="57.1" cy="87.6" r="3.2"/><circle cx="71.9" cy="35.4" r="3.6"/><circle cx="65.4" cy="38.0" r="3.9"/><circle cx="63.1" cy="22.7" r="3.7"/><circle cx="67.2" cy="60.0" r="4.0"/><circle cx="12.6" cy="0.2" r="3.8"/><circle cx="12.6" cy="87.5" r="3.8"/><circle cx="9.5" cy="5.8" r="3.6"/><circle cx="0.9" cy="31.0" r="3.1"/><circle cx="89.1" cy="31.0" r="3.1"/><circle cx="53.2" cy="16.3" r="3.2"/><circle cx="61.9" cy="66.5" r="3.4"/><circle cx="44.3" cy="21.3" r="3.1"/><circle cx="40.6" cy="60.7" r="3.3"/><circle cx="32.6" cy="65.5" r="3.3"/><circle cx="8.7" cy="27.0" r="3.5"/><circle cx="40.0" cy="16.6" r="3.6"/><circle cx="70.5" cy="55.7" r="3.4"/><circle cx="24.9" cy="54.7" r="3.4"/><circle cx="15.9" cy="60.7" r="3.1"/><circle cx="20.5" cy="82.5" r="3.6"/><circle cx="3.0" cy="26.2" r="3.1"/><circle cx="91.2" cy="26.2" r="3.1"/><circle cx="77.8" cy="71.0" r="3.6"/><circle cx="25.5" cy="76.5" r="3.2"/><circle cx="22.4" cy="49.0" r="3.2"/><circle cx="58.7" cy="27.6" r="3.0"/><circle cx="14.9" cy="48.0" r="3.5"/><circle cx="38.7" cy="75.7" r="3.7"/><circle cx="58.2" cy="49.7" r="3.1"/><circle cx="30.9" cy="22.3" r="3.0"/><circle cx="24.3" cy="10.3" r="4.0"/><circle cx="29.5" cy="27.7" r="3.4"/><circle cx="42.0" cy="70.0" r="3.8"/><circle cx="28.8" cy="82.8" r="3.3"/><circle cx="52.8" cy="70.3" r="3.8"/><circle cx="59.4" cy="38.6" r="3.9"/><circle cx="38.0" cy="64.8" r="3.1"/><circle cx="52.9" cy="44.0" r="3.2"/><circle cx="60.7" cy="60.5" r="3.1"/><circle cx="69.6" cy="21.3" r="3.7"/><circle cx="81.5" cy="55.5" r="3.5"/><circle cx="12.7" cy="75.6" r="3.9"/><circle cx="18.2" cy="76.7" r="3.6"/><circle cx="12.1" cy="65.2" r="3.7"/><circle cx="44.2" cy="10.8" r="3.6"/><circle cx="7.1" cy="44.5" r="3.3"/><circle cx="57.9" cy="33.6" r="3.8"/><circle cx="20.0" cy="11.5" r="3.2"/><circle cx="68.6" cy="10.4" r="4.0"/><circle cx="-0.0" cy="56.1" r="3.5"/><circle cx="88.2" cy="56.1" r="3.5"/><circle cx="44.3" cy="33.0" r="3.3"/><circle cx="61.8" cy="73.7" r="3.2"/><circle cx="66.3" cy="17.2" r="3.3"/><circle cx="11.6" cy="10.5" r="3.4"/><circle cx="25.1" cy="43.1" r="3.6"/><circle cx="53.4" cy="39.1" r="3.2"/><circle cx="-1.8" cy="2.0" r="3.3"/><circle cx="-1.8" cy="89.3" r="3.3"/><circle cx="86.4" cy="2.0" r="3.3"/><circle cx="86.4" cy="89.3" r="3.3"/><circle cx="5.5" cy="-4.2" r="3.3"/><circle cx="5.5" cy="83.1" r="3.3"/><circle cx="48.5" cy="44.3" r="3.1"/><circle cx="76.1" cy="64.4" r="3.7"/><circle cx="4.0" cy="59.7" r="3.3"/><circle cx="92.2" cy="59.7" r="3.3"/><circle cx="20.9" cy="81.1" r="3.5"/><circle cx="49.7" cy="11.5" r="3.3"/><circle cx="43.7" cy="44.5" r="3.2"/><circle cx="-2.3" cy="-4.3" r="3.6"/><circle cx="-2.3" cy="83.0" r="3.6"/><circle cx="85.9" cy="-4.3" r="3.6"/><circle cx="85.9" cy="83.0" r="3.6"/><circle cx="70.2" cy="75.5" r="3.5"/><circle cx="71.3" cy="4.8" r="3.6"/><circle cx="47.2" cy="48.3" r="3.2"/><circle cx="69.4" cy="-1.1" r="3.9"/><circle cx="69.4" cy="86.2" r="3.9"/><circle cx="-1.5" cy="70.3" r="4.0"/><circle cx="86.7" cy="70.3" r="4.0"/><circle cx="17.2" cy="14.4" r="3.7"/><circle cx="49.6" cy="22.4" r="3.9"/><circle cx="63.9" cy="42.5" r="3.6"/><circle cx="14.9" cy="70.8" r="3.0"/><circle cx="73.2" cy="39.2" r="3.7"/><circle cx="5.6" cy="22.9" r="3.8"/><circle cx="54.3" cy="64.5" r="3.1"/><circle cx="29.5" cy="6.6" r="3.5"/><circle cx="4.0" cy="81.2" r="3.4"/><circle cx="92.2" cy="81.2" r="3.4"/><circle cx="22.8" cy="71.9" r="3.3"/><circle cx="50.9" cy="55.3" r="3.1"/><circle cx="74.9" cy="-0.6" r="3.9"/><circle cx="74.9" cy="86.7" r="3.9"/><circle cx="22.3" cy="39.2" r="3.3"/><circle cx="61.3" cy="67.0" r="3.9"/><circle cx="66.1" cy="27.8" r="3.5"/><circle cx="53.0" cy="1.2" r="3.7"/><circle cx="53.0" cy="88.5" r="3.7"/><circle cx="80.8" cy="-0.1" r="3.2"/><circle cx="80.8" cy="87.2" r="3.2"/><circle cx="9.4" cy="37.5" r="3.6"/><circle cx="44.2" cy="65.5" r="3.5"/><circle cx="71.5" cy="71.5" r="3.1"/><circle cx="40.2" cy="37.4" r="3.9"/><circle cx="76.7" cy="11.6" r="3.2"/><circle cx="53.6" cy="60.6" r="3.7"/><circle cx="62.2" cy="-1.2" r="3.9"/><circle cx="62.2" cy="86.1" r="3.9"/><circle cx="57.0" cy="55.1" r="3.3"/><circle cx="37.2" cy="22.6" r="3.1"/><circle cx="52.7" cy="66.3" r="3.9"/><circle cx="18.1" cy="0.0" r="3.0"/><circle cx="18.1" cy="87.3" r="3.0"/><circle cx="36.8" cy="0.7" r="3.7"/><circle cx="36.8" cy="88.0" r="3.7"/><circle cx="35.1" cy="27.5" r="3.4"/><circle cx="60.3" cy="70.5" r="3.8"/><circle cx="8.9" cy="70.9" r="3.4"/><circle cx="7.1" cy="65.6" r="3.2"/><circle cx="15.9" cy="26.4" r="3.6"/><circle cx="55.5" cy="35.3" r="3.8"/><circle cx="19.2" cy="55.5" r="3.5"/><circle cx="80.7" cy="21.3" r="3.4"/><circle cx="-3.7" cy="60.6" r="3.8"/><circle cx="84.5" cy="60.6" r="3.8"/><circle cx="69.8" cy="43.8" r="3.9"/><circle cx="21.7" cy="28.2" r="4.0"/><circle cx="60.4" cy="48.3" r="3.1"/><circle cx="33.9" cy="71.2" r="3.8"/><circle cx="35.4" cy="59.2" r="3.8"/><circle cx="51.4" cy="75.9" r="3.9"/><circle cx="32.4" cy="55.3" r="3.6"/><circle cx="35.8" cy="80.9" r="3.6"/><circle cx="-2.9" cy="49.6" r="3.8"/><circle cx="85.3" cy="49.6" r="3.8"/><circle cx="58.9" cy="80.7" r="3.2"/><circle cx="7.0" cy="10.4" r="3.4"/><circle cx="47.0" cy="34.0" r="3.0"/><circle cx="12.2" cy="33.2" r="3.5"/><circle cx="65.7" cy="67.9" r="3.1"/><circle cx="6.0" cy="76.2" r="3.4"/><circle cx="72.0" cy="28.5" r="3.3"/></g></pattern>
<pattern id="pB" x="13" y="29" width="85.80" height="85.74" patternUnits="userSpaceOnUse"><rect width="85.80" height="85.74" fill="#b9cbd4"/><g fill="#f2fbff" stroke="#1c3244" stroke-width="0.6"><circle cx="58.1" cy="45.5" r="3.9"/><circle cx="50.1" cy="40.3" r="3.9"/><circle cx="55.3" cy="75.0" r="3.8"/><circle cx="-2.6" cy="29.6" r="3.5"/><circle cx="83.2" cy="29.6" r="3.5"/><circle cx="4.4" cy="27.5" r="3.9"/><circle cx="90.2" cy="27.5" r="3.9"/><circle cx="77.0" cy="75.1" r="3.9"/><circle cx="17.2" cy="61.9" r="3.9"/><circle cx="48.9" cy="63.9" r="4.1"/><circle cx="68.5" cy="62.9" r="3.2"/><circle cx="79.1" cy="10.9" r="4.1"/><circle cx="13.0" cy="22.0" r="3.5"/><circle cx="-3.4" cy="73.7" r="3.8"/><circle cx="82.4" cy="73.7" r="3.8"/><circle cx="28.6" cy="16.7" r="3.4"/><circle cx="11.1" cy="51.7" r="4.0"/><circle cx="79.5" cy="-1.7" r="3.1"/><circle cx="79.5" cy="84.0" r="3.1"/><circle cx="37.2" cy="18.2" r="3.7"/><circle cx="72.2" cy="81.1" r="3.3"/><circle cx="35.5" cy="27.7" r="3.5"/><circle cx="34.0" cy="11.6" r="3.5"/><circle cx="37.2" cy="62.7" r="3.8"/><circle cx="80.4" cy="33.1" r="3.9"/><circle cx="58.8" cy="34.4" r="3.5"/><circle cx="7.7" cy="-1.2" r="3.7"/><circle cx="7.7" cy="84.6" r="3.7"/><circle cx="69.4" cy="74.9" r="3.5"/><circle cx="39.4" cy="34.7" r="3.4"/><circle cx="11.0" cy="5.2" r="4.0"/><circle cx="46.2" cy="57.3" r="3.4"/><circle cx="46.0" cy="-0.6" r="3.2"/><circle cx="46.0" cy="85.2" r="3.2"/><circle cx="45.0" cy="79.6" r="3.4"/><circle cx="32.5" cy="80.6" r="3.8"/><circle cx="35.8" cy="52.6" r="3.3"/><circle cx="14.0" cy="57.9" r="3.8"/><circle cx="39.1" cy="22.3" r="3.6"/><circle cx="3.8" cy="52.0" r="3.8"/><circle cx="89.6" cy="52.0" r="3.8"/><circle cx="21.1" cy="34.9" r="3.3"/><circle cx="71.9" cy="10.9" r="3.2"/><circle cx="-2.7" cy="6.7" r="3.2"/><circle cx="83.1" cy="6.7" r="3.2"/><circle cx="33.6" cy="22.9" r="3.5"/><circle cx="62.9" cy="52.5" r="3.5"/><circle cx="40.3" cy="46.0" r="3.1"/><circle cx="-0.5" cy="34.3" r="3.6"/><circle cx="85.3" cy="34.3" r="3.6"/><circle cx="64.7" cy="69.3" r="3.5"/><circle cx="3.5" cy="73.9" r="3.4"/><circle cx="89.3" cy="73.9" r="3.4"/><circle cx="26.9" cy="46.3" r="3.6"/><circle cx="54.9" cy="39.8" r="4.1"/><circle cx="74.8" cy="27.4" r="3.3"/><circle cx="-3.5" cy="62.8" r="4.0"/><circle cx="82.3" cy="62.8" r="4.0"/><circle cx="71.6" cy="1.1" r="3.4"/><circle cx="71.6" cy="86.9" r="3.4"/><circle cx="33.0" cy="68.9" r="3.9"/><circle cx="66.1" cy="44.7" r="3.2"/><circle cx="26.5" cy="68.5" r="4.1"/><circle cx="6.7" cy="68.1" r="3.5"/><circle cx="63.9" cy="18.4" r="4.1"/><circle cx="-1.0" cy="-0.7" r="3.3"/><circle cx="-1.0" cy="85.1" r="3.3"/><circle cx="84.8" cy="-0.7" r="3.3"/><circle cx="84.8" cy="85.1" r="3.3"/><circle cx="72.8" cy="65.6" r="3.5"/><circle cx="60.5" cy="0.5" r="3.8"/><circle cx="60.5" cy="86.2" r="3.8"/><circle cx="-0.3" cy="45.1" r="3.3"/><circle cx="85.5" cy="45.1" r="3.3"/><circle cx="32.9" cy="57.1" r="3.4"/><circle cx="0.9" cy="79.5" r="3.8"/><circle cx="86.7" cy="79.5" r="3.8"/><circle cx="11.0" cy="27.3" r="4.0"/><circle cx="69.7" cy="6.9" r="3.4"/><circle cx="78.8" cy="0.1" r="3.3"/><circle cx="78.8" cy="85.8" r="3.3"/><circle cx="26.5" cy="10.5" r="3.5"/><circle cx="45.9" cy="68.9" r="4.1"/><circle cx="18.8" cy="10.3" r="3.2"/><circle cx="50.3" cy="27.7" r="3.7"/><circle cx="34.2" cy="44.8" r="3.5"/><circle cx="20.9" cy="79.4" r="3.7"/><circle cx="59.3" cy="11.5" r="3.3"/><circle cx="26.5" cy="34.5" r="3.7"/><circle cx="38.6" cy="-2.9" r="4.0"/><circle cx="38.6" cy="82.8" r="4.0"/><circle cx="13.9" cy="0.6" r="4.0"/><circle cx="13.9" cy="86.3" r="4.0"/><circle cx="66.3" cy="57.2" r="3.7"/><circle cx="43.8" cy="5.0" r="3.6"/><circle cx="75.1" cy="52.4" r="3.7"/><circle cx="20.7" cy="21.9" r="3.2"/><circle cx="65.2" cy="22.2" r="3.9"/><circle cx="58.8" cy="58.3" r="3.8"/><circle cx="43.5" cy="27.4" r="3.6"/><circle cx="13.1" cy="68.3" r="3.8"/><circle cx="63.8" cy="5.8" r="3.5"/><circle cx="43.3" cy="40.2" r="3.5"/><circle cx="72.0" cy="33.5" r="3.3"/><circle cx="30.6" cy="38.8" r="3.7"/><circle cx="-2.9" cy="40.0" r="3.7"/><circle cx="82.9" cy="40.0" r="3.7"/><circle cx="6.8" cy="10.6" r="3.6"/><circle cx="28.6" cy="50.7" r="3.1"/><circle cx="32.1" cy="68.6" r="3.7"/><circle cx="12.2" cy="81.1" r="3.5"/><circle cx="37.3" cy="5.1" r="3.7"/><circle cx="22.4" cy="63.8" r="3.7"/><circle cx="78.1" cy="69.5" r="4.0"/><circle cx="52.5" cy="79.5" r="3.3"/><circle cx="48.6" cy="51.7" r="3.6"/><circle cx="73.2" cy="69.0" r="4.1"/><circle cx="52.9" cy="47.0" r="3.8"/><circle cx="43.8" cy="62.6" r="3.4"/><circle cx="26.9" cy="22.3" r="3.8"/><circle cx="2.8" cy="16.2" r="4.1"/><circle cx="88.6" cy="16.2" r="4.1"/><circle cx="53.8" cy="-0.1" r="3.5"/><circle cx="53.8" cy="85.6" r="3.5"/><circle cx="26.6" cy="57.8" r="4.0"/><circle cx="56.0" cy="4.7" r="3.2"/><circle cx="60.6" cy="23.9" r="4.1"/><circle cx="74.9" cy="62.1" r="3.6"/><circle cx="19.7" cy="56.9" r="3.3"/><circle cx="24.0" cy="17.6" r="3.9"/><circle cx="52.6" cy="56.0" r="3.7"/><circle cx="80.3" cy="47.0" r="4.0"/><circle cx="76.6" cy="40.0" r="3.9"/><circle cx="-0.3" cy="56.0" r="3.9"/><circle cx="85.5" cy="56.0" r="3.9"/><circle cx="58.6" cy="23.4" r="3.6"/><circle cx="36.3" cy="75.4" r="4.1"/><circle cx="65.1" cy="11.9" r="3.2"/><circle cx="76.9" cy="7.0" r="4.0"/><circle cx="32.6" cy="1.0" r="3.8"/><circle cx="32.6" cy="86.8" r="3.8"/><circle cx="45.2" cy="46.4" r="3.4"/><circle cx="16.8" cy="5.5" r="3.9"/><circle cx="3.2" cy="41.0" r="3.6"/><circle cx="89.0" cy="41.0" r="3.6"/><circle cx="50.5" cy="6.9" r="3.6"/><circle cx="40.7" cy="0.2" r="4.0"/><circle cx="40.7" cy="85.9" r="4.0"/><circle cx="8.9" cy="75.0" r="3.3"/><circle cx="53.4" cy="34.9" r="3.4"/><circle cx="16.0" cy="50.5" r="3.7"/><circle cx="18.6" cy="6.5" r="3.2"/><circle cx="76.7" cy="18.3" r="3.7"/><circle cx="28.7" cy="64.2" r="3.9"/><circle cx="42.5" cy="40.6" r="3.6"/><circle cx="56.5" cy="62.4" r="3.3"/><circle cx="2.6" cy="61.8" r="3.9"/><circle cx="88.4" cy="61.8" r="3.9"/><circle cx="28.8" cy="29.8" r="4.0"/><circle cx="73.2" cy="57.2" r="3.9"/><circle cx="51.9" cy="11.3" r="3.6"/><circle cx="24.0" cy="51.2" r="4.0"/><circle cx="20.5" cy="-0.3" r="3.9"/><circle cx="20.5" cy="85.5" r="3.9"/><circle cx="56.2" cy="16.5" r="3.3"/><circle cx="47.0" cy="22.9" r="3.5"/><circle cx="63.8" cy="28.8" r="3.2"/><circle cx="35.3" cy="39.2" r="3.1"/><circle cx="-3.9" cy="16.9" r="3.4"/><circle cx="81.9" cy="16.9" r="3.4"/><circle cx="79.4" cy="57.5" r="4.0"/><circle cx="39.2" cy="67.6" r="3.9"/><circle cx="22.9" cy="28.8" r="3.2"/><circle cx="22.5" cy="75.1" r="3.3"/><circle cx="19.3" cy="45.6" r="3.5"/><circle cx="46.8" cy="10.2" r="3.9"/><circle cx="40.6" cy="78.9" r="3.7"/><circle cx="1.0" cy="22.4" r="4.0"/><circle cx="86.8" cy="22.4" r="4.0"/><circle cx="66.4" cy="79.7" r="3.2"/><circle cx="50.0" cy="17.3" r="4.1"/><circle cx="52.6" cy="5.5" r="3.3"/><circle cx="26.1" cy="80.9" r="3.7"/><circle cx="63.0" cy="62.8" r="4.0"/><circle cx="0.5" cy="68.6" r="3.8"/><circle cx="86.3" cy="68.6" r="3.8"/><circle cx="63.2" cy="40.8" r="3.3"/><circle cx="-2.2" cy="50.7" r="3.8"/><circle cx="83.6" cy="50.7" r="3.8"/><circle cx="5.9" cy="39.8" r="3.5"/><circle cx="79.1" cy="21.8" r="3.1"/><circle cx="18.9" cy="44.6" r="3.4"/><circle cx="3.1" cy="4.5" r="3.4"/><circle cx="88.9" cy="4.5" r="3.4"/><circle cx="51.9" cy="69.5" r="3.7"/><circle cx="6.6" cy="46.1" r="3.4"/><circle cx="60.2" cy="81.0" r="3.7"/><circle cx="78.0" cy="80.6" r="3.8"/><circle cx="66.8" cy="-1.0" r="3.3"/><circle cx="66.8" cy="84.7" r="3.3"/><circle cx="44.0" cy="50.7" r="3.2"/><circle cx="28.7" cy="74.3" r="3.8"/><circle cx="72.7" cy="45.7" r="3.6"/><circle cx="13.6" cy="11.2" r="3.2"/><circle cx="5.4" cy="33.8" r="3.2"/><circle cx="23.1" cy="22.1" r="4.0"/><circle cx="30.5" cy="6.7" r="3.7"/><circle cx="22.8" cy="5.3" r="3.5"/><circle cx="39.5" cy="10.9" r="3.3"/><circle cx="6.4" cy="56.5" r="4.1"/><circle cx="41.6" cy="17.5" r="3.8"/><circle cx="33.7" cy="33.3" r="3.8"/><circle cx="9.4" cy="40.3" r="3.5"/><circle cx="71.6" cy="23.3" r="3.4"/><circle cx="60.0" cy="68.5" r="3.5"/><circle cx="51.8" cy="22.9" r="3.2"/><circle cx="70.3" cy="52.5" r="3.7"/><circle cx="39.9" cy="56.3" r="3.5"/><circle cx="16.2" cy="75.0" r="3.9"/><circle cx="16.8" cy="40.8" r="3.5"/><circle cx="57.1" cy="28.9" r="3.6"/><circle cx="13.4" cy="45.6" r="3.6"/><circle cx="23.1" cy="40.6" r="4.0"/><circle cx="68.0" cy="29.6" r="3.4"/><circle cx="8.7" cy="63.5" r="3.8"/><circle cx="57.4" cy="52.1" r="3.3"/><circle cx="6.8" cy="70.6" r="3.7"/><circle cx="20.8" cy="69.5" r="3.4"/><circle cx="0.3" cy="46.9" r="4.0"/><circle cx="86.1" cy="46.9" r="4.0"/><circle cx="4.1" cy="46.5" r="3.4"/><circle cx="89.9" cy="46.5" r="3.4"/><circle cx="17.5" cy="16.4" r="4.0"/><circle cx="69.7" cy="16.6" r="3.8"/><circle cx="10.6" cy="17.9" r="3.6"/><circle cx="42.3" cy="74.8" r="4.0"/><circle cx="69.9" cy="40.7" r="3.5"/><circle cx="62.3" cy="74.9" r="3.8"/><circle cx="7.8" cy="23.6" r="3.7"/><circle cx="7.7" cy="81.1" r="3.5"/><circle cx="14.1" cy="34.6" r="3.2"/><circle cx="26.4" cy="-1.0" r="3.5"/><circle cx="26.4" cy="84.7" r="3.5"/><circle cx="-0.3" cy="11.6" r="3.4"/><circle cx="85.5" cy="11.6" r="3.4"/><circle cx="66.9" cy="34.6" r="3.5"/><circle cx="16.7" cy="28.7" r="4.1"/><circle cx="46.3" cy="33.7" r="3.4"/><circle cx="1.8" cy="51.9" r="3.8"/><circle cx="87.6" cy="51.9" r="3.8"/><circle cx="48.8" cy="75.4" r="3.8"/></g></pattern>
<pattern id="pG" x="818.4" y="640.45" width="9.17" height="9.1" patternUnits="userSpaceOnUse"><circle cx="4.585" cy="4.55" r="2.75" fill="#fbfcff"/><circle cx="4.585" cy="0.1" r="2" fill="#e2e6ff" opacity="0.55"/></pattern>
<radialGradient id="rimP" cx="0.5" cy="0.5" r="0.5"><stop offset="0.75" stop-color="#3a2a3c" stop-opacity="0"/><stop offset="0.95" stop-color="#3a2a3c" stop-opacity="0.15"/><stop offset="1" stop-color="#3a2a3c" stop-opacity="0.4"/></radialGradient>
<radialGradient id="rimB" cx="0.5" cy="0.5" r="0.5"><stop offset="0.7" stop-color="#203040" stop-opacity="0"/><stop offset="0.95" stop-color="#203040" stop-opacity="0.12"/><stop offset="1" stop-color="#203040" stop-opacity="0.4"/></radialGradient>
</defs>
<circle cx="914.2" cy="645" r="167.5" fill="url(#pB)"/>
<circle cx="914.2" cy="645" r="167.5" fill="url(#rimB)"/>
<circle cx="914.2" cy="645" r="167" fill="none" stroke="#203040" stroke-width="1.1" stroke-opacity="0.5" stroke-dasharray="2 1.5"/>
<path d="M819 637 L1045 640 L1046 866 L820 866 Z" fill="#8c9ff3"/>
<path d="M818 636 L1047 639 L1047 868 L818 868 Z" fill="url(#pG)"/>
<circle cx="945.6" cy="549.2" r="131" fill="url(#pP)"/>
<circle cx="945.6" cy="549.2" r="131" fill="url(#rimP)"/>
<circle cx="945.6" cy="549.2" r="130.6" fill="none" stroke="#3a2a3c" stroke-width="1.1" stroke-opacity="0.55" stroke-dasharray="2 1.5"/>
<g stroke="#4a4f56" stroke-width="1.2" fill="none"><path d="M160 971.5 H197.5 V1007.5"/></g>
</svg>
<div class="t" style="left:160px;top:959.8px;font-size:15px;color:#4a4e55;font-weight:normal;">x</div>
<div class="t" style="left:199.5px;top:960.1px;font-size:15px;color:#4a4e55;font-weight:normal;">z</div>
<div class="t" style="left:200px;top:993.8px;font-size:15px;color:#4a4e55;font-weight:normal;">y</div>
<div style="position:absolute;left:1733px;top:228px;width:109px;height:793px;background:#ebedf0"></div>
<div style="position:absolute;left:1842px;top:228px;width:32px;height:793px;background:#f1f2f4"></div>
<div style="position:absolute;left:1850px;top:255px;width:6px;height:712px;background:#8a8a8a"></div>
<div style="position:absolute;left:1874px;top:228px;width:25px;height:793px;background:#dcdee2"></div>
<div style="position:absolute;left:1874px;top:228px;width:23px;height:88px;background:#d5d7db;border-radius:0 0 6px 0"></div>
<div style="position:absolute;left:1874px;top:316px;width:25px;height:47px;background:#e9ebef;border-radius:0 6px 6px 0"></div>
<div style="position:absolute;left:1874px;top:363px;width:23px;height:42px;background:#d5d7db;border-radius:0 6px 0 0"></div>
<svg style="left:1877px;top:206px" width="18" height="18" viewBox="0 0 18 18"><g fill="#cdd0d4"><circle cx="9" cy="9" r="5.5"/><rect x="7.3" y="1" width="3.4" height="4" transform="rotate(0 9 9)"/><rect x="7.3" y="1" width="3.4" height="4" transform="rotate(45 9 9)"/><rect x="7.3" y="1" width="3.4" height="4" transform="rotate(90 9 9)"/><rect x="7.3" y="1" width="3.4" height="4" transform="rotate(135 9 9)"/><rect x="7.3" y="1" width="3.4" height="4" transform="rotate(180 9 9)"/><rect x="7.3" y="1" width="3.4" height="4" transform="rotate(225 9 9)"/><rect x="7.3" y="1" width="3.4" height="4" transform="rotate(270 9 9)"/><rect x="7.3" y="1" width="3.4" height="4" transform="rotate(315 9 9)"/></g><circle cx="9" cy="9" r="2.4" fill="#e9ebef"/></svg>
<svg style="left:1876px;top:240px" width="20" height="20" viewBox="0 0 30 30"><path d="M4.5 3.5 L26 8.5 L25 12 L16 26 L4.5 19Z" fill="#ff7a50" stroke="#111" stroke-width="1.2"/><path d="M4.5 13 L16 19.5 L25.5 12 V17 L16 23 L4.5 17.5Z" fill="#fff"/><path d="M16 19 L25.5 12" stroke="#e02020" stroke-width="2.5"/><path d="M4.5 16 L16 22.5 L25.5 16.5 V20.5 L16 26 L4.5 19.5Z" fill="#2a3a8a"/><path d="M5 17 L16 23.5" stroke="#8aa0e0" stroke-width="1"/></svg>
<svg style="left:1876px;top:285px" width="20" height="20" viewBox="0 0 30 30"><circle cx="15" cy="15" r="10" fill="none" stroke="#111" stroke-width="1"/><foreignObject x="5" y="5" width="20" height="20"><div style="width:20px;height:20px;border-radius:50%;background:conic-gradient(from 0deg,#ff3030,#ffcc00,#40ff40,#00ffff,#3030ff,#ff00ff,#ff3030);position:relative;box-shadow:0 0 0 1px #222 inset"><div style="position:absolute;left:6px;top:6px;width:8px;height:8px;border-radius:50%;background:#e6ecf3"></div></div></foreignObject></svg>
<svg style="left:1876px;top:329px" width="20" height="20" viewBox="0 0 20 20"><rect x="1.5" y="2.5" width="17" height="12" fill="url(#gGr)" stroke="#111" stroke-width="1.6"/><path d="M7 17.5 H13 L12 15 H8Z" fill="#111"/></svg>
<svg style="left:1876px;top:375px" width="20" height="20" viewBox="0 0 20 20"><rect x="1.5" y="2" width="17" height="15" fill="#6a88ee" stroke="#222" stroke-width="1.2"/><rect x="1.5" y="2" width="17" height="2.5" fill="#c8d2ff" stroke="#222" stroke-width="0.8"/><circle cx="10" cy="11" r="4.8" fill="#2a40b0"/><path d="M8 9.5 C8 7.5 12 7.5 12 9.5 C12 11 10 11 10 12.5" stroke="#fff" stroke-width="1.4" fill="none"/></svg>
<div style="position:absolute;left:1791px;top:234px;width:51px;height:25px;background:#fff"></div>
<div class="t" style="left:1743.8px;top:240.7px;font-size:15px;color:#2a2a2a;font-weight:normal;letter-spacing:-0.35px">Activ...</div>
<div class="t" style="left:1795px;top:240.7px;font-size:15px;color:#2a2a2a;font-weight:normal;letter-spacing:-0.35px">Persp...</div>
<div style="position:absolute;left:1744px;top:259px;width:98px;height:1px;background:#dcdee1"></div>
<div style="position:absolute;left:1791px;top:260px;width:51px;height:25px;background:#fff"></div>
<div class="t" style="left:1743.8px;top:265.9px;font-size:15px;color:#2a2a2a;font-weight:normal;letter-spacing:-0.35px">Displ...</div>
<div class="t" style="left:1795px;top:265.9px;font-size:15px;color:#2a2a2a;font-weight:normal;letter-spacing:-0.35px">W...</div>
<svg style="left:1817.5px;top:261.5px" width="24" height="24"><rect x="0.5" y="0.5" width="22" height="22" rx="2" fill="#fff" stroke="#cdced2"/><path d="M7.5 9.5 L11.5 13.5 L15.5 9.5" fill="none" stroke="#555" stroke-width="1"/></svg>
<div style="position:absolute;left:1744px;top:285px;width:98px;height:1px;background:#dcdee1"></div>
<div class="t" style="left:1743.8px;top:293.8px;font-size:17.5px;color:#2a2a2a;font-weight:normal;letter-spacing:-0.55px">General se...</div>
<div style="position:absolute;left:1744px;top:317px;width:98px;height:1px;background:#dcdee1"></div>
<div style="position:absolute;left:1791px;top:318.5px;width:51px;height:24.5px;background:#fff"></div>
<div class="t" style="left:1767.3px;top:324.3px;font-size:15px;color:#2a2a2a;font-weight:normal;letter-spacing:-0.35px">B...</div>
<svg style="left:1817.5px;top:319.5px" width="24" height="24"><rect x="0.5" y="0.5" width="22" height="22" rx="2" fill="#fff" stroke="#cdced2"/><path d="M7.5 9.5 L11.5 13.5 L15.5 9.5" fill="none" stroke="#555" stroke-width="1"/></svg>
<div class="t" style="left:1795px;top:324.3px;font-size:15px;color:#2a2a2a;font-weight:normal;letter-spacing:-0.35px">U...</div>
<div style="position:absolute;left:1762px;top:343px;width:80px;height:1px;background:#dcdee1"></div>
<div style="position:absolute;left:1791px;top:343px;width:1px;height:417px;background:#dcdee1"></div>
<div style="position:absolute;left:1791px;top:792px;width:1px;height:114px;background:#dcdee1"></div>
<div class="t" style="left:1767.3px;top:350.3px;font-size:15px;color:#2a2a2a;font-weight:normal;letter-spacing:-0.35px">S...</div>
<svg style="left:1794px;top:349px" width="16" height="16"><rect x="0" y="0" width="16" height="16" rx="3" fill="#0f62c4"/><path d="M4.2 8.2 L6.9 10.8 L11.8 5.6" fill="none" stroke="#fff" stroke-width="1.3"/></svg>
<div style="position:absolute;left:1762px;top:370px;width:80px;height:1px;background:#dcdee1"></div>
<div class="t" style="left:1767.3px;top:376.3px;font-size:15px;color:#2a2a2a;font-weight:normal;letter-spacing:-0.35px">S...</div>
<svg style="left:1794px;top:375px" width="16" height="16"><rect x="0" y="0" width="16" height="16" rx="3" fill="#0f62c4"/><path d="M4.2 8.2 L6.9 10.8 L11.8 5.6" fill="none" stroke="#fff" stroke-width="1.3"/></svg>
<div style="position:absolute;left:1762px;top:396px;width:80px;height:1px;background:#dcdee1"></div>
<div class="t" style="left:1767.3px;top:402.3px;font-size:15px;color:#2a2a2a;font-weight:normal;letter-spacing:-0.35px">T...</div>
<svg style="left:1794px;top:401px" width="16" height="16"><rect x="0" y="0" width="16" height="16" rx="3" fill="#0f62c4"/><path d="M4.2 8.2 L6.9 10.8 L11.8 5.6" fill="none" stroke="#fff" stroke-width="1.3"/></svg>
<div style="position:absolute;left:1762px;top:422px;width:80px;height:1px;background:#dcdee1"></div>
<div class="t" style="left:1767.3px;top:428.3px;font-size:15px;color:#2a2a2a;font-weight:normal;letter-spacing:-0.35px">T...</div>
<svg style="left:1794px;top:427px" width="16" height="16"><rect x="0" y="0" width="16" height="16" rx="3" fill="#0f62c4"/><path d="M4.2 8.2 L6.9 10.8 L11.8 5.6" fill="none" stroke="#fff" stroke-width="1.3"/></svg>
<div style="position:absolute;left:1762px;top:448px;width:80px;height:1px;background:#dcdee1"></div>
<div class="t" style="left:1767.3px;top:454.3px;font-size:15px;color:#2a2a2a;font-weight:normal;letter-spacing:-0.35px">S...</div>
<svg style="left:1794px;top:453px" width="16" height="16"><rect x="0" y="0" width="16" height="16" rx="3" fill="#0f62c4"/><path d="M4.2 8.2 L6.9 10.8 L11.8 5.6" fill="none" stroke="#fff" stroke-width="1.3"/></svg>
<div style="position:absolute;left:1762px;top:474px;width:80px;height:1px;background:#dcdee1"></div>
<div class="t" style="left:1767.3px;top:480.3px;font-size:15px;color:#2a2a2a;font-weight:normal;letter-spacing:-0.35px">S...</div>
<svg style="left:1794px;top:479px" width="16" height="16"><rect x="0" y="0" width="16" height="16" rx="3" fill="#0f62c4"/><path d="M4.2 8.2 L6.9 10.8 L11.8 5.6" fill="none" stroke="#fff" stroke-width="1.3"/></svg>
<div style="position:absolute;left:1762px;top:500px;width:80px;height:1px;background:#dcdee1"></div>
<div class="t" style="left:1767.3px;top:506.3px;font-size:15px;color:#2a2a2a;font-weight:normal;letter-spacing:-0.35px">S...</div>
<svg style="left:1794px;top:505px" width="16" height="16"><rect x="0" y="0" width="16" height="16" rx="3" fill="#0f62c4"/><path d="M4.2 8.2 L6.9 10.8 L11.8 5.6" fill="none" stroke="#fff" stroke-width="1.3"/></svg>
<div style="position:absolute;left:1762px;top:526px;width:80px;height:1px;background:#dcdee1"></div>
<div class="t" style="left:1767.3px;top:532.3px;font-size:15px;color:#2a2a2a;font-weight:normal;letter-spacing:-0.35px">S...</div>
<svg style="left:1794px;top:531px" width="16" height="16"><rect x="0" y="0" width="16" height="16" rx="3" fill="#0f62c4"/><path d="M4.2 8.2 L6.9 10.8 L11.8 5.6" fill="none" stroke="#fff" stroke-width="1.3"/></svg>
<div style="position:absolute;left:1762px;top:552px;width:80px;height:1px;background:#dcdee1"></div>
<div class="t" style="left:1767.3px;top:558.3px;font-size:15px;color:#2a2a2a;font-weight:normal;letter-spacing:-0.35px">M...</div>
<svg style="left:1794px;top:557px" width="16" height="16"><rect x="0" y="0" width="16" height="16" rx="3" fill="#0f62c4"/><path d="M4.2 8.2 L6.9 10.8 L11.8 5.6" fill="none" stroke="#fff" stroke-width="1.3"/></svg>
<div style="position:absolute;left:1762px;top:578px;width:80px;height:1px;background:#dcdee1"></div>
<div class="t" style="left:1767.3px;top:584.3px;font-size:15px;color:#2a2a2a;font-weight:normal;letter-spacing:-0.35px">C...</div>
<svg style="left:1794px;top:583px" width="16" height="16"><rect x="0" y="0" width="16" height="16" rx="3" fill="#0f62c4"/><path d="M4.2 8.2 L6.9 10.8 L11.8 5.6" fill="none" stroke="#fff" stroke-width="1.3"/></svg>
<div style="position:absolute;left:1762px;top:604px;width:80px;height:1px;background:#dcdee1"></div>
<div class="t" style="left:1767.3px;top:610.3px;font-size:15px;color:#2a2a2a;font-weight:normal;letter-spacing:-0.35px">Li...</div>
<svg style="left:1794px;top:609px" width="16" height="16"><rect x="0" y="0" width="16" height="16" rx="3" fill="#0f62c4"/><path d="M4.2 8.2 L6.9 10.8 L11.8 5.6" fill="none" stroke="#fff" stroke-width="1.3"/></svg>
<div style="position:absolute;left:1762px;top:630px;width:80px;height:1px;background:#dcdee1"></div>
<div class="t" style="left:1767.3px;top:636.3px;font-size:15px;color:#2a2a2a;font-weight:normal;letter-spacing:-0.35px">C...</div>
<svg style="left:1794px;top:635px" width="16" height="16"><rect x="0" y="0" width="16" height="16" rx="3" fill="#0f62c4"/><path d="M4.2 8.2 L6.9 10.8 L11.8 5.6" fill="none" stroke="#fff" stroke-width="1.3"/></svg>
<div style="position:absolute;left:1762px;top:656px;width:80px;height:1px;background:#dcdee1"></div>
<div class="t" style="left:1767.3px;top:662.3px;font-size:15px;color:#2a2a2a;font-weight:normal;letter-spacing:-0.35px">T...</div>
<svg style="left:1794px;top:661px" width="16" height="16"><rect x="0" y="0" width="16" height="16" rx="3" fill="#0f62c4"/><path d="M4.2 8.2 L6.9 10.8 L11.8 5.6" fill="none" stroke="#fff" stroke-width="1.3"/></svg>
<div style="position:absolute;left:1762px;top:682px;width:80px;height:1px;background:#dcdee1"></div>
<div class="t" style="left:1767.3px;top:688.3px;font-size:15px;color:#2a2a2a;font-weight:normal;letter-spacing:-0.35px">A...</div>
<svg style="left:1794px;top:687px" width="16" height="16"><rect x="0" y="0" width="16" height="16" rx="3" fill="#0f62c4"/><path d="M4.2 8.2 L6.9 10.8 L11.8 5.6" fill="none" stroke="#fff" stroke-width="1.3"/></svg>
<div style="position:absolute;left:1762px;top:708px;width:80px;height:1px;background:#dcdee1"></div>
<div class="t" style="left:1767.3px;top:714.3px;font-size:15px;color:#2a2a2a;font-weight:normal;letter-spacing:-0.35px">P...</div>
<svg style="left:1794px;top:713px" width="16" height="16"><rect x="0" y="0" width="16" height="16" rx="3" fill="#0f62c4"/><path d="M4.2 8.2 L6.9 10.8 L11.8 5.6" fill="none" stroke="#fff" stroke-width="1.3"/></svg>
<div style="position:absolute;left:1762px;top:734px;width:80px;height:1px;background:#dcdee1"></div>
<div class="t" style="left:1767.3px;top:740.3px;font-size:15px;color:#2a2a2a;font-weight:normal;letter-spacing:-0.35px">P...</div>
<svg style="left:1794px;top:739px" width="16" height="16"><rect x="0" y="0" width="16" height="16" rx="3" fill="#0f62c4"/><path d="M4.2 8.2 L6.9 10.8 L11.8 5.6" fill="none" stroke="#fff" stroke-width="1.3"/></svg>
<div style="position:absolute;left:1762px;top:760px;width:80px;height:1px;background:#dcdee1"></div>
<div class="t" style="left:1743.8px;top:768.0px;font-size:17.5px;color:#2a2a2a;font-weight:normal;letter-spacing:-0.55px">Grid &amp; Axi...</div>
<div style="position:absolute;left:1744px;top:791.5px;width:98px;height:1px;background:#dcdee1"></div>
<div class="t" style="left:1767.3px;top:798.6px;font-size:15px;color:#2a2a2a;font-weight:normal;letter-spacing:-0.35px">G...</div>
<svg style="left:1794px;top:797.3px" width="16" height="16"><rect x="0.5" y="0.5" width="15" height="15" rx="3" fill="#f7f7f8" stroke="#8a8c90" stroke-width="1"/></svg>
<div style="position:absolute;left:1762px;top:818.3px;width:80px;height:1px;background:#dcdee1"></div>
<div class="t" style="left:1767.3px;top:824.5px;font-size:15px;color:#2a2a2a;font-weight:normal;letter-spacing:-0.35px">C...</div>
<svg style="left:1794px;top:823.1999999999999px" width="16" height="16"><rect x="0.5" y="0.5" width="15" height="15" rx="3" fill="#f7f7f8" stroke="#8a8c90" stroke-width="1"/></svg>
<div style="position:absolute;left:1762px;top:844.1999999999999px;width:80px;height:1px;background:#dcdee1"></div>
<div class="t" style="left:1767.3px;top:850.4px;font-size:15px;color:#2a2a2a;font-weight:normal;letter-spacing:-0.35px">Z...</div>
<svg style="left:1794px;top:849.0999999999999px" width="16" height="16"><rect x="0.5" y="0.5" width="15" height="15" rx="3" fill="#f7f7f8" stroke="#8a8c90" stroke-width="1"/></svg>
<div style="position:absolute;left:1762px;top:870.0999999999999px;width:80px;height:1px;background:#dcdee1"></div>
<div class="t" style="left:1767.3px;top:876.3px;font-size:15px;color:#2a2a2a;font-weight:normal;letter-spacing:-0.35px">W...</div>
<svg style="left:1794px;top:875.0px" width="16" height="16"><rect x="0" y="0" width="16" height="16" rx="3" fill="#0f62c4"/><path d="M4.2 8.2 L6.9 10.8 L11.8 5.6" fill="none" stroke="#fff" stroke-width="1.3"/></svg>
<div style="position:absolute;left:1762px;top:896.0px;width:80px;height:1px;background:#dcdee1"></div>
<div class="t" style="left:1743.8px;top:904.2px;font-size:17.5px;color:#2a2a2a;font-weight:normal;letter-spacing:-0.55px">Object set...</div>
<div style="position:absolute;left:1744px;top:927.5px;width:98px;height:1px;background:#dcdee1"></div>
<div style="position:absolute;left:1791px;top:928px;width:1px;height:27px;background:#dcdee1"></div>
<div class="t" style="left:1767.3px;top:934.3px;font-size:15px;color:#2a2a2a;font-weight:normal;letter-spacing:-0.35px">B...</div>
<svg style="left:1794px;top:933px" width="16" height="16"><rect x="0.5" y="0.5" width="15" height="15" rx="3" fill="#f7f7f8" stroke="#8a8c90" stroke-width="1"/></svg>
<div style="position:absolute;left:1762px;top:954px;width:80px;height:1px;background:#dcdee1"></div>
<div class="t" style="left:1743.8px;top:962.2px;font-size:17.5px;color:#2a2a2a;font-weight:normal;letter-spacing:-0.55px">Clipping Pl...</div>
<div style="position:absolute;left:1744px;top:985.5px;width:98px;height:1px;background:#dcdee1"></div>
<div style="position:absolute;left:1791px;top:986px;width:1px;height:35px;background:#dcdee1"></div>
<div class="t" style="left:1767.3px;top:991.3px;font-size:15px;color:#2a2a2a;font-weight:normal;letter-spacing:-0.35px">S...</div>
<svg style="left:1794px;top:990px" width="16" height="16"><rect x="0" y="0" width="16" height="16" rx="3" fill="#0f62c4"/><path d="M4.2 8.2 L6.9 10.8 L11.8 5.6" fill="none" stroke="#fff" stroke-width="1.3"/></svg>
<div style="position:absolute;left:1740px;top:1003px;width:122px;height:18px;overflow:hidden"><div style="position:absolute;left:0;top:0;width:122px;height:30px;background:#fff;border:1px solid #1e6fd0;border-radius:4px"></div><div class="t" style="left:4px;top:8px;font-size:15.5px;color:#222">"Wireframe" settings</div></div>
<svg style="left:24px;top:1037px" width="33" height="24" viewBox="0 0 33 24"><defs><linearGradient id="cl" x1="0" y1="0" x2="0" y2="1"><stop offset="0" stop-color="#a9c2f5"/><stop offset="1" stop-color="#6e93e3"/></linearGradient></defs><path d="M7 22 C2 22 1 15 6 13.5 C6 8 12 6 15 9 C17 3 27 3 27.5 10.5 C32 11 32.5 22 27 22 Z" fill="url(#cl)"/></svg>
<div class="t" style="left:64.6px;top:1032.7px;font-size:14.5px;color:#1f1f1f;font-weight:normal;">15°C</div>
<div class="t" style="left:64.6px;top:1052.5px;font-size:14.5px;color:#555;font-weight:normal;">Bewölkt</div>
<svg style="left:530px;top:1036px" width="30" height="30" viewBox="0 0 30 30"><defs><linearGradient id="wl" x1="0" y1="0" x2="1" y2="1"><stop offset="0" stop-color="#34c0f8"/><stop offset="1" stop-color="#0a6ed8"/></linearGradient></defs><path d="M0 2 Q0 0 2 0 H14 V14 H0Z M15.5 0 H27 Q29 0 29 2 V14 H15.5Z M0 15.5 H14 V29 H2 Q0 29 0 27Z M15.5 15.5 H29 V27 Q29 29 27 29 H15.5Z" fill="url(#wl)"/></svg>
<div style="position:absolute;left:577px;top:1030.5px;width:273px;height:38.5px;border-radius:19px;background:#fbfbfb;border:1px solid #dcdcdc"></div>
<svg style="left:591px;top:1040px" width="20" height="20" viewBox="0 0 20 20"><circle cx="8" cy="8" r="6.3" fill="none" stroke="#222" stroke-width="1.8"/><path d="M12.5 12.5 L18 18" stroke="#222" stroke-width="2" stroke-linecap="round"/></svg>
<div class="t" style="left:622.6px;top:1042.2px;font-size:17px;color:#505050;font-weight:normal;">Suche</div>
<svg style="left:866px;top:1036px" width="30" height="30" viewBox="0 0 30 30"><rect x="8" y="1" width="22" height="22" rx="2" fill="#f4f4f4" stroke="#e0e0e0" stroke-width="0.6"/><rect x="0.5" y="7" width="22" height="22" rx="2" fill="#222"/><rect x="8" y="7" width="14.5" height="15" fill="#bdbdbd"/></svg>
<svg style="left:920px;top:1036px" width="32" height="28" viewBox="0 0 32 28"><path d="M1 3 Q1 1 3 1 H10 L13 4 H30 Q31 4 31 5 V26 H1Z" fill="#e7a813"/><path d="M1 7 H31 V26 Q31 27 30 27 H2 Q1 27 1 26Z" fill="#fcd34a"/><path d="M6 27 V21 Q6 19 8 19 H24 Q26 19 26 21 V27Z" fill="#1d7ad8"/><rect x="9" y="22" width="14" height="1.5" fill="#0d4a9a"/></svg>
<div style="position:absolute;left:932px;top:1070px;width:8px;height:3.6px;background:#8a8a8a;border-radius:2px"></div>
<svg style="left:975px;top:1034px" width="32" height="32" viewBox="0 0 32 32"><defs><linearGradient id="eg" x1="0" y1="0" x2="1" y2="0.6"><stop offset="0" stop-color="#2aaee8"/><stop offset="0.45" stop-color="#2cc0d8"/><stop offset="1" stop-color="#52dc48"/></linearGradient><linearGradient id="eb" x1="0" y1="0" x2="0.3" y2="1"><stop offset="0" stop-color="#1c8ef0"/><stop offset="1" stop-color="#0f62c8"/></linearGradient></defs><path d="M1 17 C1 8 8 1 16.5 1 C25 1 31 7.5 31 15 C31 19.5 28 21.5 24 21.5 C20 21.5 18 19.5 18.7 17 C19.3 14 17.5 12.5 15 12.6 C9 13 5 14.5 1 17Z" fill="url(#eg)"/><path d="M1 17 C1 26 8 31 16 31 C21 31 25.8 28.5 28.8 23.4 C24 25.5 18 25 15 21.5 C12.5 18.5 12.8 14.5 15 12.6 C10 12.2 5 13.5 1.3 15.5Z" fill="url(#eb)"/><path d="M8.5 25 C8.5 18 11.5 14 15 12.6 C12.8 14.5 12.5 18.5 15 21.5 C18 25 24 25.5 28.8 23.4 C25.5 28 20.5 30.8 15 30.6 C11 30.2 8.5 28 8.5 25Z" fill="#0c50a8"/><path d="M15 12.6 C17.8 12.3 19.6 14 18.7 16.8 C18.1 18.8 19.5 20.8 23 21.4 C20 22.6 16.5 22.5 14.8 20.5 C13 18.3 13.2 14 15 12.6Z" fill="#eef0ef"/></svg>
<div style="position:absolute;left:987px;top:1070px;width:8px;height:3.6px;background:#8a8a8a;border-radius:2px"></div>
<svg style="left:1030px;top:1035px" width="30" height="30" viewBox="0 0 30 30"><path d="M8.5 5 V2 Q8.5 0.8 9.7 0.8 H20.3 Q21.5 0.8 21.5 2 V5" fill="none" stroke="#30b0f0" stroke-width="1.8"/><path d="M0.5 6 Q0.5 4.5 2 4.5 H28 Q29.5 4.5 29.5 6 V26 Q29.5 29.5 26 29.5 H4 Q0.5 29.5 0.5 26Z" fill="#1e4a8c"/><rect x="9" y="11" width="5" height="5" fill="#f05a28"/><rect x="15.5" y="11" width="5" height="5" fill="#7fba00"/><rect x="9" y="17.5" width="5" height="5" fill="#00a4ef"/><rect x="15.5" y="17.5" width="5" height="5" fill="#ffb900"/></svg>
<svg style="left:1085.8px;top:1035px" width="30" height="30" viewBox="0 0 30 30"><rect x="0" y="0" width="30" height="30" rx="5" fill="#1c3c82"/><rect x="0" y="22" width="6" height="8" fill="#1c3c82"/><text x="7" y="22" font-family="Liberation Sans" font-weight="bold" font-size="17" fill="#fff">B</text><circle cx="21.5" cy="20.5" r="1.7" fill="#30a8f0"/></svg>
<svg style="left:1141px;top:1037px" width="30" height="26" viewBox="0 0 30 26"><path d="M7.5 0 L15 4.8 L7.5 9.6 L0 4.8Z M22.5 0 L30 4.8 L22.5 9.6 L15 4.8Z M7.5 9.6 L15 14.4 L7.5 19.2 L0 14.4Z M22.5 9.6 L30 14.4 L22.5 19.2 L15 14.4Z M15 16 L22.5 20.8 L15 25.6 L7.5 20.8Z" fill="#111"/></svg>
<svg style="left:1196.6px;top:1035.1px" width="29" height="29" viewBox="0 0 29 29"><circle cx="14.5" cy="14.5" r="14.5" fill="#1ed760"/><path d="M6.5 10.5 C11 8.5 18 8.7 22.5 11.3 M7.5 15 C11.5 13.3 17 13.6 20.8 15.6 M8.5 19.2 C12 18 15.5 18.2 19 19.8" fill="none" stroke="#111" stroke-width="2.2" stroke-linecap="round"/></svg>
<div style="position:absolute;left:1207px;top:1070px;width:8px;height:3.6px;background:#8a8a8a;border-radius:2px"></div>
<div style="position:absolute;left:1243px;top:1026px;width:44px;height:48px;border-radius:5px;background:#f7f8f8;border:1px solid #e6e8e8"></div>
<svg style="left:1251.3px;top:1035px" width="30" height="30" viewBox="0 0 30 30"><path d="M9.5 0.3 H30 V30 H0 V15.5 C3 13 6 9 9.5 0.3Z" fill="#000"/><path d="M9.5 0.5 C11.5 4 14 9 16 12.5 L19 14.5 L23 15 L20.5 18.5 L30 15.8 V18.5 L21.5 26.5 C19.5 29 17.5 29 15.5 27 L3 17.5 L0 15.8 V15 C4 12.5 7 7 9.5 0.5Z" fill="#fff"/><path d="M9.8 0.5 C8 6 5 11 1.8 13.5" fill="none" stroke="#000" stroke-width="2.4"/><path d="M8.5 16 L14.5 19.5 L16.5 21.5 L13 22.2 L8 18Z" fill="#222"/><text x="21" y="13" font-family="Liberation Sans" font-size="14.5" fill="#b0b0b0">8</text></svg>
<div style="position:absolute;left:1257.3px;top:1070px;width:18.6px;height:4px;background:#1a6fd0;border-radius:2px"></div>
<svg style="left:1308px;top:1036px" width="27" height="27" viewBox="0 0 27 27"><defs><linearGradient id="ph" x1="0" y1="0" x2="1" y2="1"><stop offset="0" stop-color="#2a8ae8"/><stop offset="1" stop-color="#6a3fc0"/></linearGradient></defs><rect width="27" height="27" rx="4" fill="url(#ph)"/><path d="M0 22 L11 10 L22 21 L27 17 V23 Q27 27 23 27 H4 Q0 27 0 23Z" fill="#4cc2f4"/><path d="M4 27 L13 17 L23 27Z" fill="#2a9ae8"/><circle cx="20" cy="5.5" r="2.3" fill="#e8e0ff"/></svg>
<div style="position:absolute;left:1318px;top:1070px;width:8px;height:3.6px;background:#8a8a8a;border-radius:2px"></div>
<svg style="left:1616px;top:1045px" width="14" height="9" viewBox="0 0 14 9"><path d="M1 8 L7 2 L13 8" fill="none" stroke="#222" stroke-width="1.4"/></svg>
<svg style="left:1652px;top:1042px" width="22" height="19" viewBox="0 0 22 19"><path d="M4 14 C0 14 0 8 4 8 C4 3 11 1 13.5 5 C17 3 20 6 19 9 C21 10 20 14 18 14Z" fill="#9a9a9a" stroke="#222" stroke-width="1.1"/><circle cx="15.6" cy="12.5" r="5.6" fill="#1a6fd0" stroke="#eef0ef" stroke-width="0.8"/><rect x="14.9" y="11.2" width="1.6" height="4.5" fill="#fff"/><circle cx="15.7" cy="9.4" r="0.95" fill="#fff"/></svg>
<svg style="left:1693px;top:1042px" width="21" height="15" viewBox="0 0 21 15"><path d="M1 5.5 C6 0 15 0 20 5.5 M4 8.5 C7.5 5 13.5 5 17 8.5 M7 11.5 C9 9.7 12 9.7 14 11.5" fill="none" stroke="#222" stroke-width="1.4"/><circle cx="10.5" cy="13.5" r="1.3" fill="#222"/></svg>
<svg style="left:1723px;top:1042px" width="20" height="16" viewBox="0 0 20 16"><path d="M1 5.5 H4.5 L10 1.5 V14.5 L4.5 10.5 H1Z" fill="none" stroke="#222" stroke-width="1.3" stroke-linejoin="round"/><path d="M12.5 5 C14 6.5 14 9.5 12.5 11 M15 3 C17.5 5.5 17.5 10.5 15 13" fill="none" stroke="#222" stroke-width="1.3"/><path d="M17.5 1.5 C21 5 21 11 17.5 14.5" fill="none" stroke="#bbb" stroke-width="1.2"/></svg>
<svg style="left:1753px;top:1043.5px" width="21" height="13" viewBox="0 0 21 13"><rect x="0.8" y="0.8" width="16.5" height="11.4" rx="2.5" fill="none" stroke="#222" stroke-width="1.4"/><rect x="3" y="3" width="8" height="7" fill="#222"/><path d="M18.5 4.5 Q20.5 4.5 20.5 6.5 Q20.5 8.5 18.5 8.5Z" fill="#222"/></svg>
<div class="t" style="left:1829px;top:1032.7px;font-size:14.5px;color:#1f1f1f;font-weight:normal;">18:53</div>
<div class="t" style="left:1794px;top:1052.7px;font-size:14.5px;color:#1f1f1f;font-weight:normal;">23.10.2024</div>
<svg style="left:1876.5px;top:1040px" width="18" height="21" viewBox="0 0 18 21"><path d="M9 1.5 C4.5 1.5 3 5 3 8.5 V13 L1 16 H17 L15 13 V8.5 C15 5 13.5 1.5 9 1.5Z" fill="#1a4aa8"/><path d="M6.5 17.5 C6.5 20.5 11.5 20.5 11.5 17.5Z" fill="#1a4aa8"/></svg></body></html>
